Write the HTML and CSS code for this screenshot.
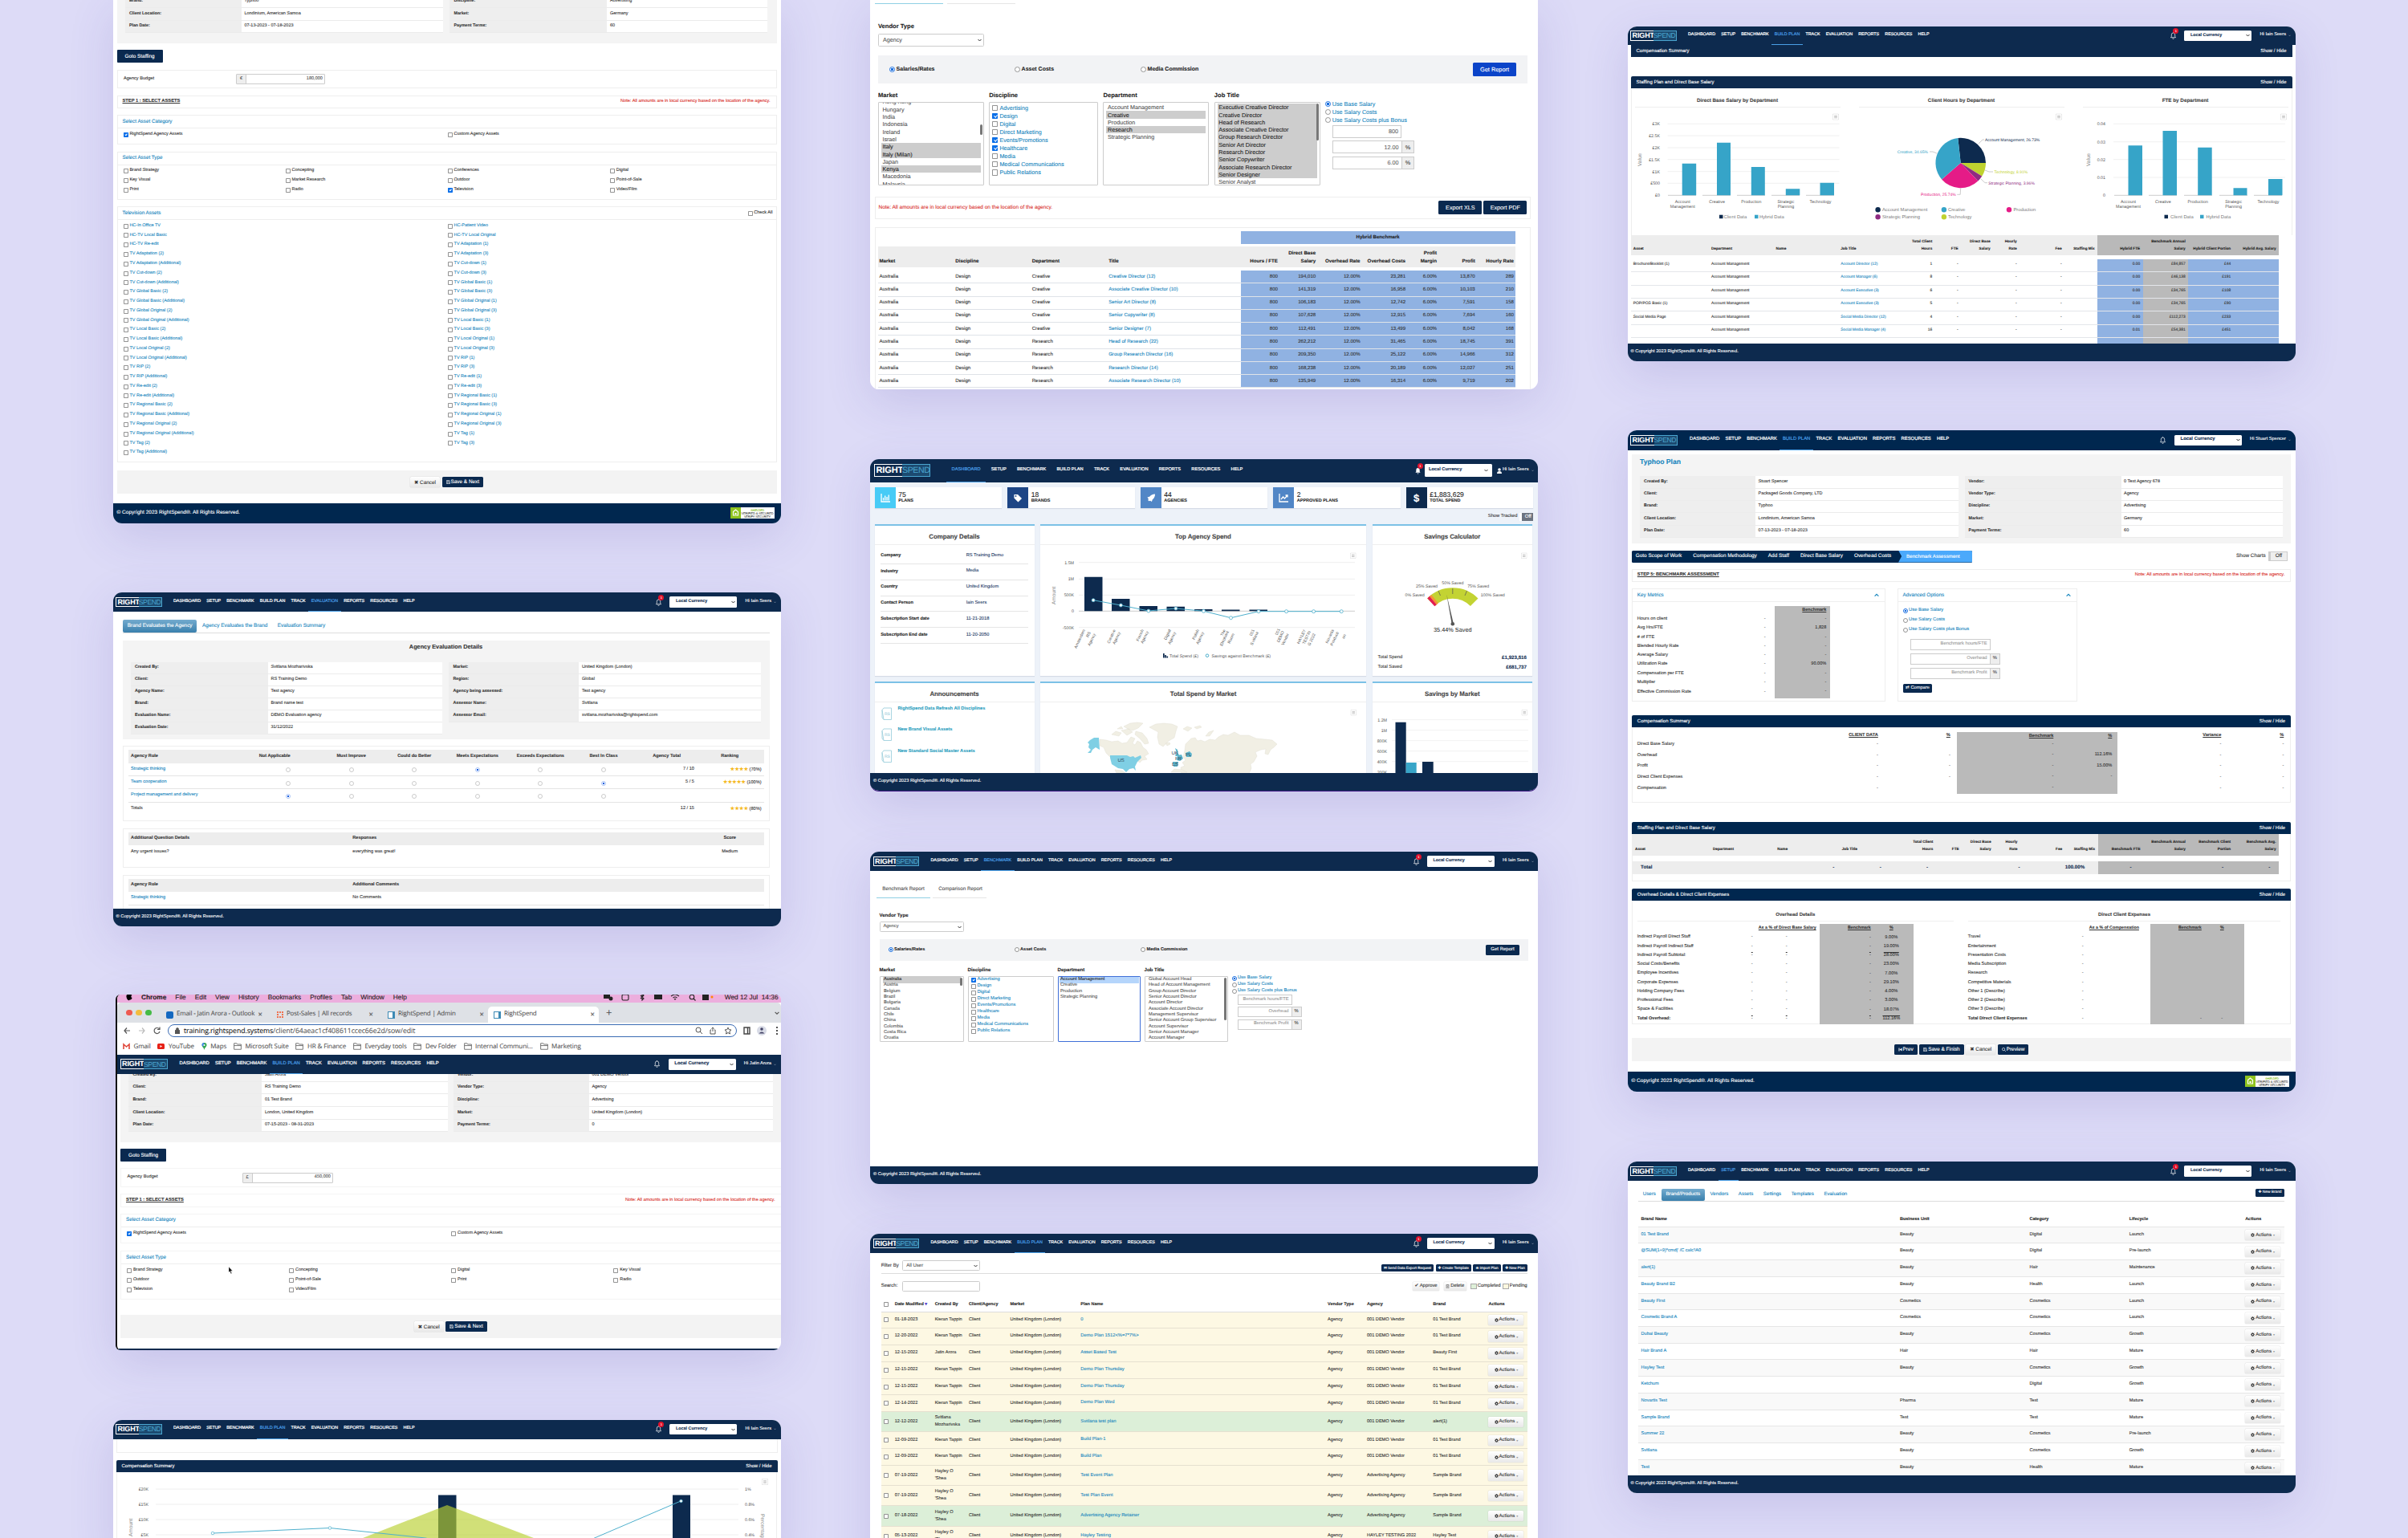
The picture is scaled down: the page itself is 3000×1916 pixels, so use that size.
FILE: index.html
```html
<!DOCTYPE html>
<html lang="en">
<head>
    <meta charset="UTF-8">
    <meta name="viewport" content="width=device-width, initial-scale=1.0">
    <title>RightSpend - product screens</title>
    <link rel="stylesheet" href="styles.css">
</head>
<body>
    <!-- shared icons -->
    <svg class="sprite" aria-hidden="true">
        <symbol id="bell" viewBox="0 0 16 20"><path d="M8 2a5 5 0 0 1 5 5v5l2 3H1l2-3V7a5 5 0 0 1 5-5zM8 0v2M6 17a2 2 0 0 0 4 0" fill="none" stroke="currentColor" stroke-width="1.6"/></symbol>
        <symbol id="bell-solid" viewBox="0 0 16 20"><path d="M8 2a5 5 0 0 1 5 5v5l2 3H1l2-3V7a5 5 0 0 1 5-5zM6 17a2 2 0 0 0 4 0z" fill="currentColor"/></symbol>
        <symbol id="chev" viewBox="0 0 10 8"><path d="M1 2l4 4 4-4" fill="none" stroke="currentColor" stroke-width="2"/></symbol>
        <symbol id="menu" viewBox="0 0 15 15"><rect x=".5" y=".5" width="14" height="14" rx="2" fill="#fff" stroke="#ccc"/><path d="M4 5h7M4 7.500h7M4 10h7" stroke="#999"/></symbol>
        <symbol id="folder" viewBox="0 0 16 14"><path d="M1 1h5l1.500 2H15v10H1zM1 5.500h14" fill="none" stroke="#666" stroke-width="1.400"/></symbol>
        <symbol id="save" viewBox="0 0 12 12"><path d="M1 1h8l2 2v8H1zM3 1v3h5V1M3 11V7h6v4" fill="none" stroke="currentColor" stroke-width="1.300"/></symbol>
        <symbol id="gear" viewBox="0 0 12 12"><circle cx="6" cy="6" r="3.400" fill="none" stroke="currentColor" stroke-width="2.600"/><path d="M6 0v12M0 6h12M1.800 1.800l8.400 8.400M10.200 1.800l-8.400 8.400" stroke="currentColor" stroke-width="1.500" stroke-dasharray="2 8 2"/></symbol>
        <symbol id="secured" viewBox="0 0 55 14"><path d="M0 0h55v14H0z" fill="#fff"/><path d="M0 0h13v14H0z" fill="#8fc31f"/><path d="M3.500 5.500 6.500 3l3 2.500V10h-6z" fill="none" stroke="#fff" stroke-width="1.200"/><path d="M5.500 7h2v2h-2z" fill="#fff"/></symbol>
        <symbol id="rs" viewBox="0 0 14 17"><path d="M1 3.500 3 1h9.500v14.500H3z" fill="none" stroke="#9fd0de" stroke-width=".9"/><path d="M1 3.500V13l2 2.500" fill="none" stroke="#9fd0de" stroke-width=".9"/></symbol>
    </svg>

    <main class="board">
        <div class="col">

            <!-- plan, select assets -->
            <section class="card plan plan-a">
                <div class="content">
                    <div class="details">
                        <div class="kv">
                            <p><b>Brand:</b><span>Typhoo</span></p>
                            <p><b>Client Location:</b><span>Londinium, American Samoa</span></p>
                            <p><b>Plan Date:</b><span>07-13-2023 - 07-18-2023</span></p>
                        </div>
                        <div class="kv">
                            <p><b>Discipline:</b><span>Advertising</span></p>
                            <p><b>Market:</b><span>Germany</span></p>
                            <p><b>Payment Terms:</b><span>60</span></p>
                        </div>
                    </div>
                    <button class="btn goto">Goto Staffing</button>
                    <div class="panel budget"><span>Agency Budget</span><span class="group"><em>€</em><b>180,000</b></span></div>
                    <div class="panel step"><u>STEP 1 : SELECT ASSETS</u><span class="note">Note: All amounts are in local currency based on the location of the agency.</span></div>
                    <div class="panel category">
                        <h4>Select Asset Category</h4>
                        <div class="opts two"><label><i class="cb on"></i>RightSpend Agency Assets</label><label><i class="cb"></i>Custom Agency Assets</label></div>
                    </div>
                    <div class="panel type">
                        <h4>Select Asset Type</h4>
                        <div class="opts four">
                            <label><i class="cb"></i>Brand Strategy</label><label><i class="cb"></i>Concepting</label><label><i class="cb"></i>Conferences</label><label><i class="cb"></i>Digital</label>
                            <label><i class="cb"></i>Key Visual</label><label><i class="cb"></i>Market Research</label><label><i class="cb"></i>Outdoor</label><label><i class="cb"></i>Point-of-Sale</label>
                            <label><i class="cb"></i>Print</label><label><i class="cb"></i>Radio</label><label><i class="cb on"></i>Television</label><label><i class="cb"></i>Video/Film</label>
                        </div>
                    </div>
                    <div class="panel television">
                        <h4>Television Assets <label><i class="cb"></i>Check All</label></h4>
                        <div class="opts two blue">
                            <label><i class="cb"></i>HC-In Office TV</label><label><i class="cb"></i>HC-Patient Video</label>
                            <label><i class="cb"></i>HC-TV Local Basic</label><label><i class="cb"></i>HC-TV Local Original</label>
                            <label><i class="cb"></i>HC-TV Re-edit</label><label><i class="cb"></i>TV Adaptation (1)</label>
                            <label><i class="cb"></i>TV Adaptation (2)</label><label><i class="cb"></i>TV Adaptation (3)</label>
                            <label><i class="cb"></i>TV Adaptation (Additional)</label><label><i class="cb"></i>TV Cut-down (1)</label>
                            <label><i class="cb"></i>TV Cut-down (2)</label><label><i class="cb"></i>TV Cut-down (3)</label>
                            <label><i class="cb"></i>TV Cut-down (Additional)</label><label><i class="cb"></i>TV Global Basic (1)</label>
                            <label><i class="cb"></i>TV Global Basic (2)</label><label><i class="cb"></i>TV Global Basic (3)</label>
                            <label><i class="cb"></i>TV Global Basic (Additional)</label><label><i class="cb"></i>TV Global Original (1)</label>
                            <label><i class="cb"></i>TV Global Original (2)</label><label><i class="cb"></i>TV Global Original (3)</label>
                            <label><i class="cb"></i>TV Global Original (Additional)</label><label><i class="cb"></i>TV Local Basic (1)</label>
                            <label><i class="cb"></i>TV Local Basic (2)</label><label><i class="cb"></i>TV Local Basic (3)</label>
                            <label><i class="cb"></i>TV Local Basic (Additional)</label><label><i class="cb"></i>TV Local Original (1)</label>
                            <label><i class="cb"></i>TV Local Original (2)</label><label><i class="cb"></i>TV Local Original (3)</label>
                            <label><i class="cb"></i>TV Local Original (Additional)</label><label><i class="cb"></i>TV RIP (1)</label>
                            <label><i class="cb"></i>TV RIP (2)</label><label><i class="cb"></i>TV RIP (3)</label>
                            <label><i class="cb"></i>TV RIP (Additional)</label><label><i class="cb"></i>TV Re-edit (1)</label>
                            <label><i class="cb"></i>TV Re-edit (2)</label><label><i class="cb"></i>TV Re-edit (3)</label>
                            <label><i class="cb"></i>TV Re-edit (Additional)</label><label><i class="cb"></i>TV Regional Basic (1)</label>
                            <label><i class="cb"></i>TV Regional Basic (2)</label><label><i class="cb"></i>TV Regional Basic (3)</label>
                            <label><i class="cb"></i>TV Regional Basic (Additional)</label><label><i class="cb"></i>TV Regional Original (1)</label>
                            <label><i class="cb"></i>TV Regional Original (2)</label><label><i class="cb"></i>TV Regional Original (3)</label>
                            <label><i class="cb"></i>TV Regional Original (Additional)</label><label><i class="cb"></i>TV Tag (1)</label>
                            <label><i class="cb"></i>TV Tag (2)</label><label><i class="cb"></i>TV Tag (3)</label>
                            <label><i class="cb"></i>TV Tag (Additional)</label>
                        </div>
                    </div>
                    <div class="actions"><button class="btn light">✖ Cancel</button><button class="btn"><svg><use href="#save"/></svg>Save &amp; Next</button></div>
                </div>
                <footer class="foot big">© Copyright 2023 RightSpend®. All Rights Reserved.<span class="seal"><svg><use href="#secured"/></svg><small><em>SHIELDED</em>VERIFIED &amp; SECURED<br>VERIFY SECURITY</small></span></footer>
            </section>

            <!-- evaluation -->
            <section class="card evaluation">
                <header class="nav">
                    <span class="logo"><b>RIGHT</b><i>SPEND</i></span>
                    <nav><a>DASHBOARD</a><a>SETUP</a><a>BENCHMARK</a><a>BUILD PLAN</a><a>TRACK</a><a class="on">EVALUATION</a><a>REPORTS</a><a>RESOURCES</a><a>HELP</a></nav>
                    <span class="bell"><svg><use href="#bell"/></svg><sup>1</sup></span>
                    <span class="currency">Local Currency<svg><use href="#chev"/></svg></span>
                    <span class="user">Hi Iain Seers <svg><use href="#chev"/></svg></span>
                </header>
                <div class="content">
                    <div class="tabs"><a class="on">Brand Evaluates the Agency</a><a>Agency Evaluates the Brand</a><a>Evaluation Summary</a></div>
                    <div class="details">
                        <h3>Agency Evaluation Details</h3>
                        <div class="kv">
                            <p><b>Created By:</b><span>Svitlana Mozharivska</span></p>
                            <p><b>Client:</b><span>RS Training Demo</span></p>
                            <p><b>Agency Name:</b><span>Test agency</span></p>
                            <p><b>Brand:</b><span>Brand name test</span></p>
                            <p><b>Evaluation Name:</b><span>DEMO Evaluation agency</span></p>
                            <p><b>Evaluation Date:</b><span>31/12/2022</span></p>
                        </div>
                        <div class="kv">
                            <p><b>Market:</b><span>United Kingdom (London)</span></p>
                            <p><b>Region:</b><span>Global</span></p>
                            <p><b>Agency being assessed:</b><span>Test agency</span></p>
                            <p><b>Assessor Name:</b><span>Svitlana</span></p>
                            <p><b>Assessor Email:</b><span>svitlana.mozharivska@rightspend.com</span></p>
                        </div>
                    </div>
                    <div class="panel scores">
                        <div class="row head"><b>Agency Role</b><b>Not Applicable</b><b>Must Improve</b><b>Could do Better</b><b>Meets Expectations</b><b>Exceeds Expectations</b><b>Best In Class</b><b>Agency Total</b><b>Ranking</b></div>
                        <div class="row"><a>Strategic thinking</a><i class="rd"></i><i class="rd"></i><i class="rd"></i><i class="rd on"></i><i class="rd"></i><i class="rd"></i><span>7 / 10</span><span><em>★★★★</em> (70%)</span></div>
                        <div class="row"><a>Team cooperation</a><i class="rd"></i><i class="rd"></i><i class="rd"></i><i class="rd"></i><i class="rd"></i><i class="rd on"></i><span>5 / 5</span><span><em>★★★★★</em> (100%)</span></div>
                        <div class="row"><a>Project management and delivery</a><i class="rd on"></i><i class="rd"></i><i class="rd"></i><i class="rd"></i><i class="rd"></i><i class="rd"></i><span></span><span></span></div>
                        <div class="row total"><span>Totals</span><span></span><span></span><span></span><span></span><span></span><span></span><span>12 / 15</span><span><em>★★★★</em> (80%)</span></div>
                    </div>
                    <div class="panel answers">
                        <div class="row head"><b>Additional Question Details</b><b>Responses</b><b>Score</b></div>
                        <div class="row"><span>Any urgent issues?</span><span>everything was great!</span><span>Medium</span></div>
                    </div>
                    <div class="panel answers">
                        <div class="row head"><b>Agency Role</b><b>Additional Comments</b></div>
                        <div class="row line"><a>Strategic thinking</a><span>No Comments</span></div>
                    </div>
                </div>
                <footer class="foot">© Copyright 2023 RightSpend®. All Rights Reserved.</footer>
            </section>

            <!-- plan in a browser window -->
            <section class="card plan plan-b">
                <div class="menubar">
                    <svg width="8" height="9" viewBox="0 0 8 9"><path d="M4 1C2 0 0 1 .5 4S3 9 4 8s3 0 3.500-3C6 5 6 2 7.500 2 6 0 5 1 4 1z"/></svg>
                    <b>Chrome</b><span>File</span><span>Edit</span><span>View</span><span>History</span><span>Bookmarks</span><span>Profiles</span><span>Tab</span><span>Window</span><span>Help</span>
                    <svg class="status" width="140" height="9" viewBox="0 0 140 9"><g fill="none" stroke="#222" stroke-width="1.100"><rect x="23" y="1" width="8" height="7" rx="1.500"/><path d="M46 2l4 4-2 2V0l2 2-4 4M84 3q5-4 10 0M86.500 5q2.500-2 5 0"/><circle cx="110" cy="4" r="2.800"/><path d="M112 6l2.500 2.500"/></g><path d="M0 1h8v5H0zM63 1h10v6H63zM87.500 6h3L89 8zM123 1h8v7h-8z" fill="#222"/><circle cx="9" cy="6" r="2.500" fill="#222"/><circle cx="135" cy="4" r="1.500" fill="#f80"/></svg>
                    <span>Wed 12 Jul&nbsp; 14:36</span>
                </div>
                <div class="tabstrip">
                    <span class="lights"><i></i><i></i><i></i></span>
                    <span class="tab"><i class="fav outlook"></i>Email - Jatin Arora - Outlook<em>✕</em></span>
                    <span class="tab"><i class="fav hub"></i>Post-Sales | All records<em>✕</em></span>
                    <span class="tab"><i class="fav"></i>RightSpend | Admin<em>✕</em></span>
                    <span class="tab on"><i class="fav"></i>RightSpend<em>✕</em></span>
                    <span class="plus">+</span>
                    <svg class="drop"><use href="#chev"/></svg>
                </div>
                <div class="urlbar">
                    <svg width="52" height="10" viewBox="0 0 52 10"><g fill="none" stroke="#555" stroke-width="1.200"><path d="M8 5H1M4 1.500 1 5l3 3.500"/><path d="M19 5h7M23 1.500 26 5l-3 3.500" stroke="#bbb"/><path d="M44.500 3a3.500 3.500 0 1 0 .5 3M45 .5V3.500H42"/></g></svg>
                    <span class="url"><svg width="6" height="8" viewBox="0 0 6 8"><path d="M0 3.500h6V8H0zM1.500 3.500V2a1.500 1.500 0 0 1 3 0v1.500" fill="#555" stroke="#555" stroke-width=".7"/></svg><b>training.rightspend.systems</b>/client/64aeac1cf408611ccec66e2d/sow/edit
                        <svg class="tools" width="46" height="10" viewBox="0 0 46 10"><g fill="none" stroke="#555"><circle cx="4" cy="4" r="3"/><path d="M6 6l3 3M20 4h-1v5h6V4h-1M22 6V1M20.500 2.500 22 1l1.500 1.500M41 1l1.200 2.700 2.800.3-2.200 2 .7 3L41 7.500 38.500 9l.7-3L37 4l2.800-.3z"/></g></svg>
                    </span>
                    <svg width="44" height="12" viewBox="0 0 44 12"><path d="M1 2h7v8H1zM5.500 2v8" fill="none" stroke="#444" stroke-width="1.400"/><circle cx="23" cy="6" r="6" fill="#d8dbe6"/><circle cx="23" cy="4" r="1.800" fill="#446"/><path d="M19.500 9.500q3.500-4 7 0z" fill="#446"/><circle cx="42" cy="2" r=".9"/><circle cx="42" cy="6" r=".9"/><circle cx="42" cy="10" r=".9"/></svg>
                </div>
                <div class="bookmarks">
                    <span><svg width="9" height="7" viewBox="0 0 9 7"><path d="M1 7V1l3.500 3L8 1v6" fill="none" stroke="#e0483c" stroke-width="1.600"/></svg>Gmail</span>
                    <span><svg width="9" height="7" viewBox="0 0 9 7"><rect width="9" height="7" rx="1.500" fill="#e62117"/><path d="M3.500 2v3L6 3.500z" fill="#fff"/></svg>YouTube</span>
                    <span><svg width="7" height="9" viewBox="0 0 7 9"><path d="M3.500 9C3 6 .5 5 .5 3a3 3 0 0 1 6 0c0 2-2.500 3-3 6z" fill="#34a853"/><path d="M.5 3a3 3 0 0 1 3-3L2 5z" fill="#4285f4"/><circle cx="3.500" cy="3" r="1.100" fill="#fff"/></svg>Maps</span>
                    <span><svg><use href="#folder"/></svg>Microsoft Suite</span><span><svg><use href="#folder"/></svg>HR &amp; Finance</span><span><svg><use href="#folder"/></svg>Everyday tools</span><span><svg><use href="#folder"/></svg>Dev Folder</span><span><svg><use href="#folder"/></svg>Internal Communi...</span><span><svg><use href="#folder"/></svg>Marketing</span>
                </div>
                <header class="nav wide">
                    <span class="logo"><b>RIGHT</b><i>SPEND</i></span>
                    <nav><a>DASHBOARD</a><a>SETUP</a><a>BENCHMARK</a><a class="on">BUILD PLAN</a><a>TRACK</a><a>EVALUATION</a><a>REPORTS</a><a>RESOURCES</a><a>HELP</a></nav>
                    <span class="bell"><svg><use href="#bell"/></svg></span>
                    <span class="currency">Local Currency<svg><use href="#chev"/></svg></span>
                    <span class="user">Hi Jatin Arora <svg><use href="#chev"/></svg></span>
                </header>
                <div class="content">
                    <div class="details">
                        <div class="kv">
                            <p><b>Created By:</b><span>Jatin Arora</span></p>
                            <p><b>Client:</b><span>RS Training Demo</span></p>
                            <p><b>Brand:</b><span>01 Test Brand</span></p>
                            <p><b>Client Location:</b><span>London, United Kingdom</span></p>
                            <p><b>Plan Date:</b><span>07-15-2023 - 08-31-2023</span></p>
                        </div>
                        <div class="kv">
                            <p><b>Vendor:</b><span>001 DEMO Vendor</span></p>
                            <p><b>Vendor Type:</b><span>Agency</span></p>
                            <p><b>Discipline:</b><span>Advertising</span></p>
                            <p><b>Market:</b><span>United Kingdom (London)</span></p>
                            <p><b>Payment Terms:</b><span>0</span></p>
                        </div>
                    </div>
                    <button class="btn goto">Goto Staffing</button>
                    <div class="panel budget"><span>Agency Budget</span><span class="group"><em>£</em><b>450,000</b></span></div>
                    <div class="panel step"><u>STEP 1 : SELECT ASSETS</u><span class="note">Note: All amounts are in local currency based on the location of the agency.</span></div>
                    <div class="panel category">
                        <h4>Select Asset Category</h4>
                        <div class="opts two"><label><i class="cb on"></i>RightSpend Agency Assets</label><label><i class="cb"></i>Custom Agency Assets</label></div>
                    </div>
                    <div class="panel type">
                        <h4>Select Asset Type</h4>
                        <div class="opts four">
                            <label><i class="cb"></i>Brand Strategy</label><label><i class="cb"></i>Concepting</label><label><i class="cb"></i>Digital</label><label><i class="cb"></i>Key Visual</label>
                            <label><i class="cb"></i>Outdoor</label><label><i class="cb"></i>Point-of-Sale</label><label><i class="cb"></i>Print</label><label><i class="cb"></i>Radio</label>
                            <label><i class="cb"></i>Television</label><label><i class="cb"></i>Video/Film</label>
                        </div>
                        <svg class="cursor" viewBox="0 0 6 10"><path d="M0 0v8l1.800-1.600L3.200 10l1.300-.6L3 6h2.600z" stroke="#fff" stroke-width=".4"/></svg>
                    </div>
                    <div class="actions"><button class="btn light">✖ Cancel</button><button class="btn"><svg><use href="#save"/></svg>Save &amp; Next</button></div>
                </div>
                <footer class="foot thin"></footer>
            </section>

            <!-- compensation summary chart -->
            <section class="card compensation">
                <header class="nav">
                    <span class="logo"><b>RIGHT</b><i>SPEND</i></span>
                    <nav><a>DASHBOARD</a><a>SETUP</a><a>BENCHMARK</a><a class="on">BUILD PLAN</a><a>TRACK</a><a>EVALUATION</a><a>REPORTS</a><a>RESOURCES</a><a>HELP</a></nav>
                    <span class="bell"><svg><use href="#bell"/></svg><sup>1</sup></span>
                    <span class="currency">Local Currency<svg><use href="#chev"/></svg></span>
                    <span class="user">Hi Iain Seers <svg><use href="#chev"/></svg></span>
                </header>
                <div class="content">
                    <div class="panel blank"></div>
                    <div class="bar">Compensation Summary<span>Show / Hide</span></div>
                    <svg class="chart" width="823" height="90">
                        <path d="M48 21h726M48 40h726M48 59h726M48 78h726" stroke="#eee"/>
                        <path d="M400 28.500h22.500V90H400zM692 28.500h22V90h-22z" fill="#0d2a4e"/>
                        <path d="M411 41 519 82l20 8H282l24-8z" fill="#b8cf2f" fill-opacity=".65"/>
                        <path d="m119 76 146-6.500 119 12.500 40 8M590 84l112-48" fill="none" stroke="#4fb0cd"/>
                        <g fill="#fff" stroke="#4fb0cd" stroke-width=".7"><circle cx="119" cy="76" r="1.800"/><circle cx="265" cy="69.500" r="1.800"/><circle cx="702.500" cy="36" r="1.800"/></g>
                        <g class="end"><text x="39" y="23">£20K</text><text x="39" y="42">£15K</text><text x="39" y="61">£10K</text><text x="39" y="80">£5K</text></g>
                        <text x="782" y="23">1%</text><text x="782" y="42">0.8%</text><text x="782" y="61">0.6%</text><text x="782" y="80">0.4%</text>
                        <text class="axis" transform="translate(18.500 80) rotate(-90)">Amount</text>
                        <text class="axis" transform="translate(802 52) rotate(90)">Percentage</text>
                        <use href="#menu" x="803" y="8" width="8" height="8"/>
                    </svg>
                </div>
            </section>
        </div>

        <div class="col">

            <!-- benchmark results -->
            <section class="card report report-a">
                <div class="content">
                    <div class="report-tabs"><a class="on"></a><a></a></div>
                    <h5>Vendor Type</h5>
                    <span class="select">Agency<svg><use href="#chev"/></svg></span>
                    <div class="kinds"><label><i class="rd on"></i>Salaries/Rates</label><label><i class="rd"></i>Asset Costs</label><label><i class="rd"></i>Media Commission</label><button class="btn">Get Report</button></div>
                    <div class="filters">
                        <div><h5>Market</h5><ul class="list market"><li>Hong Kong</li><li>Hungary</li><li>India</li><li>Indonesia</li><li>Ireland</li><li>Israel</li><li class="sel">Italy</li><li class="sel">Italy (Milan)</li><li>Japan</li><li class="sel">Kenya</li><li>Macedonia</li><li>Malaysia</li></ul></div>
                        <div><h5>Discipline</h5><ul class="list checks"><li><i class="cb"></i>Advertising</li><li><i class="cb on"></i>Design</li><li><i class="cb"></i>Digital</li><li><i class="cb"></i>Direct Marketing</li><li><i class="cb on"></i>Events/Promotions</li><li><i class="cb on"></i>Healthcare</li><li><i class="cb"></i>Media</li><li><i class="cb"></i>Medical Communications</li><li><i class="cb"></i>Public Relations</li></ul></div>
                        <div><h5>Department</h5><ul class="list"><li>Account Management</li><li class="sel">Creative</li><li>Production</li><li class="sel">Research</li><li>Strategic Planning</li></ul></div>
                        <div><h5>Job Title</h5><ul class="list jobs"><li class="sel">Executive Creative Director</li><li class="sel">Creative Director</li><li class="sel">Head of Research</li><li class="sel">Associate Creative Director</li><li class="sel">Group Research Director</li><li class="sel">Senior Art Director</li><li class="sel">Research Director</li><li class="sel">Senior Copywriter</li><li class="sel">Associate Research Director</li><li class="sel">Senior Designer</li><li>Senior Analyst</li></ul></div>
                        <div class="basis"><label><i class="rd on"></i>Use Base Salary</label><label><i class="rd"></i>Use Salary Costs</label><label><i class="rd"></i>Use Salary Costs plus Bonus</label><span class="field">800</span><span class="field">12.00<em>%</em></span><span class="field">6.00<em>%</em></span></div>
                    </div>
                    <div class="panel export"><span class="note">Note: All amounts are in local currency based on the location of the agency.</span><button class="btn">Export XLS</button><button class="btn">Export PDF</button></div>
                    <div class="panel rates">
                        <div class="row band"><b>Hybrid Benchmark</b></div>
                        <div class="row head"><b>Market</b><b>Discipline</b><b>Department</b><b>Title</b><b>Hours / FTE</b><b>Direct Base<br>Salary</b><b>Overhead Rate</b><b>Overhead Costs</b><b>Profit<br>Margin</b><b>Profit</b><b>Hourly Rate</b></div>
                        <div class="row"><span>Australia</span><span>Design</span><span>Creative</span><a>Creative Director (12)</a><span>800</span><span>194,010</span><span>12.00%</span><span>23,281</span><span>6.00%</span><span>13,870</span><span>289</span></div>
                        <div class="row"><span>Australia</span><span>Design</span><span>Creative</span><a>Associate Creative Director (10)</a><span>800</span><span>141,319</span><span>12.00%</span><span>16,958</span><span>6.00%</span><span>10,103</span><span>210</span></div>
                        <div class="row"><span>Australia</span><span>Design</span><span>Creative</span><a>Senior Art Director (8)</a><span>800</span><span>106,183</span><span>12.00%</span><span>12,742</span><span>6.00%</span><span>7,591</span><span>158</span></div>
                        <div class="row"><span>Australia</span><span>Design</span><span>Creative</span><a>Senior Copywriter (8)</a><span>800</span><span>107,628</span><span>12.00%</span><span>12,915</span><span>6.00%</span><span>7,694</span><span>160</span></div>
                        <div class="row"><span>Australia</span><span>Design</span><span>Creative</span><a>Senior Designer (7)</a><span>800</span><span>112,491</span><span>12.00%</span><span>13,499</span><span>6.00%</span><span>8,042</span><span>168</span></div>
                        <div class="row"><span>Australia</span><span>Design</span><span>Research</span><a>Head of Research (22)</a><span>800</span><span>262,212</span><span>12.00%</span><span>31,465</span><span>6.00%</span><span>18,745</span><span>391</span></div>
                        <div class="row"><span>Australia</span><span>Design</span><span>Research</span><a>Group Research Director (16)</a><span>800</span><span>209,350</span><span>12.00%</span><span>25,122</span><span>6.00%</span><span>14,966</span><span>312</span></div>
                        <div class="row"><span>Australia</span><span>Design</span><span>Research</span><a>Research Director (14)</a><span>800</span><span>168,238</span><span>12.00%</span><span>20,189</span><span>6.00%</span><span>12,027</span><span>251</span></div>
                        <div class="row"><span>Australia</span><span>Design</span><span>Research</span><a>Associate Research Director (10)</a><span>800</span><span>135,949</span><span>12.00%</span><span>16,314</span><span>6.00%</span><span>9,719</span><span>202</span></div>
                    </div>
                </div>
            </section>

            <!-- dashboard -->
            <section class="card dashboard">
                <header class="nav tall">
                    <span class="logo"><b>RIGHT</b><i>SPEND</i></span>
                    <nav><a class="on">DASHBOARD</a><a>SETUP</a><a>BENCHMARK</a><a>BUILD PLAN</a><a>TRACK</a><a>EVALUATION</a><a>REPORTS</a><a>RESOURCES</a><a>HELP</a></nav>
                    <span class="bell"><svg><use href="#bell-solid"/></svg><sup>1</sup></span>
                    <span class="currency">Local Currency<svg><use href="#chev"/></svg></span>
                    <span class="user"><svg class="person" viewBox="0 0 6 7"><circle cx="3" cy="2" r="1.800" fill="#fff"/><path d="M0 7q0-3 3-3t3 3z" fill="#fff"/></svg>Hi Iain Seers <svg><use href="#chev"/></svg></span>
                </header>
                <div class="content">
                    <div class="stats">
                        <div><i class="c1"><svg viewBox="0 0 12 11"><path d="M1 0v10h11M3.500 8.500V5M5.700 8.500V2.500M8 8.500V4M10.200 8.500V1.500" fill="none" stroke="#fff" stroke-width="1.300"/></svg></i><p>75<b>PLANS</b></p></div>
                        <div><i class="c2"><svg viewBox="0 0 12 12"><path d="M1 1h5l5.500 5.500-5 5L1 6z" fill="#fff"/><circle cx="3.300" cy="3.300" r="1" fill="#1d4585"/></svg></i><p>18<b>BRANDS</b></p></div>
                        <div><i class="c3"><svg viewBox="0 0 12 12"><path d="M11.500.5C8 .5 5.500 2 4 4L1 5l1.500 2L2 9l1 1 2-.5L7 11l1-3c2-1.500 3.500-4 3.500-7.500z" fill="#fff"/></svg></i><p>44<b>AGENCIES</b></p></div>
                        <div><i class="c3"><svg viewBox="0 0 12 11"><path d="M1 0v10h11M3 7l2.500-3 2 2L11 2M8.500 2H11v2.500" fill="none" stroke="#fff" stroke-width="1.300"/></svg></i><p>2<b>APPROVED PLANS</b></p></div>
                        <div><i class="c4">$</i><p>£1,883,629<b>TOTAL SPEND</b></p></div>
                    </div>
                    <div class="tracked">Show Tracked<span>Off</span></div>
                    <div class="tiles">
                        <article>
                            <h3>Company Details</h3>
                            <div class="company">
                                <p><b>Company</b>RS Training Demo</p><p><b>Industry</b>Media</p><p><b>Country</b>United Kingdom</p><p><b>Contact Person</b>Iain Seers</p><p><b>Subscription Start date</b>11-21-2018</p><p><b>Subscription End date</b>11-20-2050</p>
                            </div>
                        </article>
                        <article>
                            <h3>Top Agency Spend</h3>
                            <svg class="chart" width="406" height="163">
                                <path d="M48 21.700h344M48 42.300h344M48 62.300h344M48 102.700h344" stroke="#eee"/><path d="M48 82.300h344" stroke="#ccc"/>
                                <path d="M55 39.700h22.500v42.600H55zM89 67h22.500v15.300H89zM123.500 76H146v6.300h-22.500zM157.500 76.700H180v5.600h-22.500zM192 80h22.500v2.300H192zM226 80.500h22.500v1.800H226zM260.500 80.500H283v1.800h-22.500z" fill="#0d2a4e"/>
                                <path d="m66.100 68.700 34.300 6.300 34.500 7 34-3 34.600 3.300 34 8.400 34.500-8 103.200 0" fill="none" stroke="#4fb0cd"/>
                                <g fill="#fff" stroke="#4fb0cd" stroke-width=".8"><circle cx="66.100" cy="68.700" r="2"/><circle cx="100.400" cy="75" r="2"/><circle cx="134.900" cy="82" r="2"/><circle cx="168.900" cy="79" r="2"/><circle cx="203.500" cy="82.300" r="2"/><circle cx="237.500" cy="90.700" r="2"/><circle cx="272" cy="82.700" r="2"/><circle cx="306.600" cy="82.700" r="2"/><circle cx="340.600" cy="82.700" r="2"/><circle cx="375.200" cy="82.700" r="2"/></g>
                                <g class="end"><text x="42" y="23.700">1.5M</text><text x="42" y="44.300">1M</text><text x="42" y="64.300">500K</text><text x="42" y="84.300">0</text><text x="42" y="104.700">-500K</text></g>
                                <text class="axis" transform="translate(18.500 74) rotate(-90)">Amount</text>
                                <g class="tick">
                                    <text transform="translate(56 106) rotate(-65)">Amsterdam</text><text transform="translate(63 109) rotate(-65)">RS</text><text transform="translate(69 111) rotate(-65)">Agency</text>
                                    <text transform="translate(94 106) rotate(-65)">Creative</text><text transform="translate(100 109) rotate(-65)">Agency</text>
                                    <text transform="translate(129 106) rotate(-65)">French</text><text transform="translate(135 108) rotate(-65)">Agency</text>
                                    <text transform="translate(163 106) rotate(-65)">Digital</text><text transform="translate(169 109) rotate(-65)">Agency</text>
                                    <text transform="translate(198 106) rotate(-65)">Polish</text><text transform="translate(204 109) rotate(-65)">Agency</text>
                                    <text transform="translate(231 106) rotate(-65)">The</text><text transform="translate(235 108) rotate(-65)">Elephant</text><text transform="translate(242 111) rotate(-65)">Room</text>
                                    <text transform="translate(267 106) rotate(-65)">001</text><text transform="translate(272 109) rotate(-65)">Svitlana</text>
                                    <text transform="translate(299 105) rotate(-65)">001</text><text transform="translate(304 108) rotate(-65)">DEMO</text><text transform="translate(310 111) rotate(-65)">Vendor</text>
                                    <text transform="translate(331 106) rotate(-65)">HAYLEY</text><text transform="translate(337 108) rotate(-65)">TESTIN</text><text transform="translate(343 111) rotate(-65)">G 2022</text>
                                    <text transform="translate(366 106) rotate(-65)">Novartis</text><text transform="translate(372 109) rotate(-65)">Producti</text><text transform="translate(381 112) rotate(-65)">on</text>
                                </g>
                                <path d="M153 135h1.700v5.500H153zM155.200 137h1.700v3.500h-1.700zM157.400 138.500h1.700v2h-1.700z" fill="#0d2a4e"/><text x="161" y="139.500">Total Spend (£)</text>
                                <circle cx="208" cy="137.700" r="1.800" fill="#fff" stroke="#4fb0cd"/><text x="213.500" y="139.500">Savings against Benchmark (£)</text>
                                <use href="#menu" x="386" y="9.500" width="7.500" height="7.500"/>
                            </svg>
                        </article>
                        <article>
                            <h3>Savings Calculator</h3>
                            <svg class="chart" width="199" height="134">
                                <path d="M72.800 71.300A38 38 0 0 1 126.700 71.300" fill="none" stroke="#c3d333" stroke-width="13.500"/>
                                <path d="M72.800 71.300 75.500 68.900" stroke="#e31b54" stroke-width="13.500"/><path d="M75.400 69 77.500 67.300" stroke="#f4923a" stroke-width="13.500"/>
                                <path d="M99.800 54v7M82 57l2.500 6M117.500 57 115 63" stroke="#555" stroke-width=".7"/>
                                <path d="M92.200 61.300 98.700 98.500h2.300z"/><circle cx="99.800" cy="98.300" r="2.300"/>
                                <g class="mid"><text x="52.700" y="63.700">0% Saved</text><text x="67.500" y="52.700">25% Saved</text><text x="99.800" y="48.500">50% Saved</text><text x="131.700" y="52.700">75% Saved</text><text x="149.800" y="63.700">100% Saved</text><text class="saved" x="99.800" y="108">35.44% Saved</text></g>
                                <use href="#menu" x="185" y="9.500" width="7.500" height="7.500"/>
                            </svg>
                            <p class="sum">Total Spend<b>£1,923,516</b></p><p class="sum">Total Saved<b>£681,737</b></p>
                        </article>
                        <article>
                            <h3>Announcements</h3>
                            <div class="news"><a><i><svg><use href="#rs"/></svg>RS</i>RightSpend Data Refresh All Disciplines</a><a><i><svg><use href="#rs"/></svg>RS</i>New Brand Visual Assets</a><a><i><svg><use href="#rs"/></svg>RS</i>New Standard Social Master Assets</a></div>
                        </article>
                        <article>
                            <h3>Total Spend by Market</h3>
                            <svg class="chart" width="406" height="90">
                                <g fill="#f1efe4" stroke="#dedbd0" stroke-width=".4">
                                    <path d="m74 46 8 1 7 2 8-1 5 3 6-1 5-7 5 2-3 6 3 2 3-5 4 2 3 6 4 3 3 5-5 3 3 4-6 1-3 3-3-2-6-4H88l-6-6-3-7-5-2z"/>
                                    <path d="m89 40 5-4 7 2-3 4zM101 35l9-2 5 4-7 4zM104 30l8-4 9-1 7 1-6 6-7 3-6-2zM119 36l8 2 6 7 2 6-5 1-6-7-6-5zM96 33l5-3 2 3z"/>
                                    <path d="m136 31 8-4 10-1 10 1 7 3-2 6-2 8-7 4-7 7-5-3-2-9 1-6z"/>
                                    <path d="m156 51 5-1 1 2-4 2z"/>
                                    <path d="m180 60 1-8 7-7 5-1 3 4 4-1 5 2 6-3 7 1 4-4 6-3 6 1 8-4 7 4 11 0 9 4 11 1 9 1 6 5-4 4-4 3-3 6-4-1 1-6-6 1-7 3 2 5-4 7-4 3 1 5-4 9H176l-1-10 5-2-3-4 4-3-3-4z"/>
                                    <path d="m178 33 5-3 6 2-5 4zM192 31l7-2 2 2-6 2zM206 42l4-5 6-2-5 7z"/>
                                    <path d="m163 87 4-4 10 1 6 3zM93 84l9 1 4 3H95z"/>
                                </g>
                                <path d="M59 50l3-3 5-3 6 0 1 15-5-3-4 3-2 4-4 0 4-4-3-3 1-4zM87 66h21l4 2 4-1 2 2 7-3 1 3-5 5-3 6 1 5-3-3-5 1-4 4-4-4-6-1-8-5-2-8z" fill="#7fcfe4"/>
                                <path d="m168 57 3 2 1 5 2 3-6 0 2-4zM171 66l5-1 2 5-4 3-4-1zM165 74h7l-1 6h-5zM181 63l5-2 3 3-1 4h-6z" fill="#5db5cb"/>
                                <g class="map"><text x="96.500" y="73.500">US</text><text x="163.500" y="65">UK</text><text x="168" y="72">FR</text><text x="164" y="79">ES</text><text x="181" y="67">PL</text></g>
                                <use href="#menu" x="386.500" y="9" width="7.500" height="7.500"/>
                            </svg>
                        </article>
                        <article>
                            <h3>Savings by Market</h3>
                            <svg class="chart" width="199" height="90">
                                <path d="M24 21.700h170M24 34.700h170M24 47.700h170M24 60.700h170M24 73.700h170" stroke="#f2f2f2"/>
                                <path d="M28.500 24.700h13.200V90H28.500zM62 74h13.700v16H62z" fill="#0d2a4e"/><path d="M41.700 75h13v15h-13z" fill="#38a5c8"/>
                                <g class="end"><text x="18" y="23.700">1.2M</text><text x="18" y="36.700">1M</text><text x="18" y="49.700">800K</text><text x="18" y="62.700">600K</text><text x="18" y="75.700">400K</text><text x="18" y="88.500">200K</text></g>
                                <use href="#menu" x="185.500" y="9" width="7.500" height="7.500"/>
                            </svg>
                        </article>
                    </div>
                </div>
                <footer class="foot">© Copyright 2023 RightSpend®. All Rights Reserved.</footer>
            </section>

            <!-- benchmark form -->
            <section class="card report report-b">
                <header class="nav">
                    <span class="logo"><b>RIGHT</b><i>SPEND</i></span>
                    <nav><a>DASHBOARD</a><a>SETUP</a><a class="on">BENCHMARK</a><a>BUILD PLAN</a><a>TRACK</a><a>EVALUATION</a><a>REPORTS</a><a>RESOURCES</a><a>HELP</a></nav>
                    <span class="bell"><svg><use href="#bell"/></svg><sup>1</sup></span>
                    <span class="currency">Local Currency<svg><use href="#chev"/></svg></span>
                    <span class="user">Hi Iain Seers <svg><use href="#chev"/></svg></span>
                </header>
                <div class="content">
                    <div class="report-tabs"><a class="on">Benchmark Report</a><a>Comparison Report</a></div>
                    <h5>Vendor Type</h5>
                    <span class="select">Agency<svg><use href="#chev"/></svg></span>
                    <div class="kinds"><label><i class="rd on"></i>Salaries/Rates</label><label><i class="rd"></i>Asset Costs</label><label><i class="rd"></i>Media Commission</label><button class="btn">Get Report</button></div>
                    <div class="filters">
                        <div><h5>Market</h5><ul class="list jobs"><li class="sel">Australia</li><li>Austria</li><li>Belgium</li><li>Brazil</li><li>Bulgaria</li><li>Canada</li><li>Chile</li><li>China</li><li>Colombia</li><li>Costa Rica</li><li>Croatia</li></ul></div>
                        <div><h5>Discipline</h5><ul class="list checks"><li><i class="cb on"></i>Advertising</li><li><i class="cb"></i>Design</li><li><i class="cb"></i>Digital</li><li><i class="cb"></i>Direct Marketing</li><li><i class="cb"></i>Events/Promotions</li><li><i class="cb"></i>Healthcare</li><li><i class="cb"></i>Media</li><li><i class="cb"></i>Medical Communications</li><li><i class="cb"></i>Public Relations</li></ul></div>
                        <div><h5>Department</h5><ul class="list focus"><li class="sel">Account Management</li><li>Creative</li><li>Production</li><li>Strategic Planning</li></ul></div>
                        <div><h5>Job Title</h5><ul class="list titles"><li>Global Account Head</li><li>Head of Account Management</li><li>Group Account Director</li><li>Senior Account Director</li><li>Account Director</li><li>Associate Account Director</li><li>Management Supervisor</li><li>Senior Account Group Supervisor</li><li>Account Supervisor</li><li>Senior Account Manager</li><li>Account Manager</li></ul></div>
                        <div class="basis"><label><i class="rd on"></i>Use Base Salary</label><label><i class="rd"></i>Use Salary Costs</label><label><i class="rd"></i>Use Salary Costs plus Bonus</label><span class="field">Benchmark hours/FTE</span><span class="field">Overhead<em>%</em></span><span class="field">Benchmark Profit<em>%</em></span></div>
                    </div>
                </div>
                <footer class="foot">© Copyright 2023 RightSpend®. All Rights Reserved.</footer>
            </section>

            <!-- plan list -->
            <section class="card plans">
                <header class="nav">
                    <span class="logo"><b>RIGHT</b><i>SPEND</i></span>
                    <nav><a>DASHBOARD</a><a>SETUP</a><a>BENCHMARK</a><a class="on">BUILD PLAN</a><a>TRACK</a><a>EVALUATION</a><a>REPORTS</a><a>RESOURCES</a><a>HELP</a></nav>
                    <span class="bell"><svg><use href="#bell"/></svg><sup>1</sup></span>
                    <span class="currency">Local Currency<svg><use href="#chev"/></svg></span>
                    <span class="user">Hi Iain Seers <svg><use href="#chev"/></svg></span>
                </header>
                <div class="content">
                    <div class="filter"><label>Filter By</label><span class="select">All User<svg><use href="#chev"/></svg></span><span class="tools"><button class="btn">✉ Send Data Export Request</button><button class="btn">✚ Create Template</button><button class="btn">⊕ Import Plan</button><button class="btn">✚ New Plan</button></span></div>
                    <div class="search"><label>Search:</label><span class="select"></span><span class="tools"><button class="btn light">✔ Approve</button><button class="btn light"><svg viewBox="0 0 10 12"><path d="M0 2h10M3 2V.5h4V2M1.500 2v9.500h7V2M4 4.500V9M6 4.500V9" fill="none" stroke="#333"/></svg>Delete</button><span><i class="green"></i>Completed</span><span><i></i>Pending</span></span></div>
                    <div class="row head"><i class="cb"></i><b>Date Modified <em>▾</em></b><b>Created By</b><b>Client/Agency</b><b>Market</b><b>Plan Name</b><b>Vendor Type</b><b>Agency</b><b>Brand</b><b>Actions</b></div>
                    <div class="row"><i class="cb"></i><span>01-18-2023</span><span>Kieran Tappin</span><span>Client</span><span>United Kingdom (London)</span><a>0</a><span>Agency</span><span>001 DEMO Vendor</span><span>01 Test Brand</span><button class="btn light act"><svg><use href="#gear"/></svg>Actions<em>▾</em></button></div>
                    <div class="row"><i class="cb"></i><span>12-20-2022</span><span>Kieran Tappin</span><span>Client</span><span>United Kingdom (London)</span><a>Demo Plan 1512&lt;%=7*7%&gt;</a><span>Agency</span><span>001 DEMO Vendor</span><span>01 Test Brand</span><button class="btn light act"><svg><use href="#gear"/></svg>Actions<em>▾</em></button></div>
                    <div class="row"><i class="cb"></i><span>12-15-2022</span><span>Jatin Arora</span><span>Client</span><span>United Kingdom (London)</span><a>Asset Based Test</a><span>Agency</span><span>001 DEMO Vendor</span><span>Beauty First</span><button class="btn light act"><svg><use href="#gear"/></svg>Actions<em>▾</em></button></div>
                    <div class="row"><i class="cb"></i><span>12-15-2022</span><span>Kieran Tappin</span><span>Client</span><span>United Kingdom (London)</span><a>Demo Plan Thursday</a><span>Agency</span><span>001 DEMO Vendor</span><span>01 Test Brand</span><button class="btn light act"><svg><use href="#gear"/></svg>Actions<em>▾</em></button></div>
                    <div class="row"><i class="cb"></i><span>12-15-2022</span><span>Kieran Tappin</span><span>Client</span><span>United Kingdom (London)</span><a>Demo Plan Thursday</a><span>Agency</span><span>001 DEMO Vendor</span><span>01 Test Brand</span><button class="btn light act"><svg><use href="#gear"/></svg>Actions<em>▾</em></button></div>
                    <div class="row"><i class="cb"></i><span>12-14-2022</span><span>Kieran Tappin</span><span>Client</span><span>United Kingdom (London)</span><a>Demo Plan Wed</a><span>Agency</span><span>001 DEMO Vendor</span><span>01 Test Brand</span><button class="btn light act"><svg><use href="#gear"/></svg>Actions<em>▾</em></button></div>
                    <div class="row tall done"><i class="cb"></i><span>12-12-2022</span><span>Svitlana<br>Mozharivska</span><span>Client</span><span>United Kingdom (London)</span><a>Svitlana test plan</a><span>Agency</span><span>001 DEMO Vendor</span><span>alert(1)</span><button class="btn light act"><svg><use href="#gear"/></svg>Actions<em>▾</em></button></div>
                    <div class="row"><i class="cb"></i><span>12-09-2022</span><span>Kieran Tappin</span><span>Client</span><span>United Kingdom (London)</span><a>Build Plan-1</a><span>Agency</span><span>001 DEMO Vendor</span><span>01 Test Brand</span><button class="btn light act"><svg><use href="#gear"/></svg>Actions<em>▾</em></button></div>
                    <div class="row"><i class="cb"></i><span>12-09-2022</span><span>Kieran Tappin</span><span>Client</span><span>United Kingdom (London)</span><a>Build Plan</a><span>Agency</span><span>001 DEMO Vendor</span><span>01 Test Brand</span><button class="btn light act"><svg><use href="#gear"/></svg>Actions<em>▾</em></button></div>
                    <div class="row tall"><i class="cb"></i><span>07-19-2022</span><span>Hayley O<br>'Shea</span><span>Client</span><span>United Kingdom (London)</span><a>Test Event Plan</a><span>Agency</span><span>Advertising Agency</span><span>Sample Brand</span><button class="btn light act"><svg><use href="#gear"/></svg>Actions<em>▾</em></button></div>
                    <div class="row tall"><i class="cb"></i><span>07-19-2022</span><span>Hayley O<br>'Shea</span><span>Client</span><span>United Kingdom (London)</span><a>Test Plan Event</a><span>Agency</span><span>Advertising Agency</span><span>Sample Brand</span><button class="btn light act"><svg><use href="#gear"/></svg>Actions<em>▾</em></button></div>
                    <div class="row tall done"><i class="cb"></i><span>07-18-2022</span><span>Hayley O<br>'Shea</span><span>Client</span><span>United Kingdom (London)</span><a>Advertising Agency Retainer</a><span>Agency</span><span>Advertising Agency</span><span>Sample Brand</span><button class="btn light act"><svg><use href="#gear"/></svg>Actions<em>▾</em></button></div>
                    <div class="row tall"><i class="cb"></i><span>05-13-2022</span><span>Hayley O<br>'Shea</span><span>Client</span><span>United Kingdom (London)</span><a>Hayley Testing</a><span>Agency</span><span>HAYLEY TESTING 2022</span><span>Hayley Test</span><button class="btn light act"><svg><use href="#gear"/></svg>Actions<em>▾</em></button></div>
                </div>
            </section>
        </div>

        <div class="col">

            <!-- staffing plan -->
            <section class="card staffing">
                <header class="nav">
                    <span class="logo"><b>RIGHT</b><i>SPEND</i></span>
                    <nav><a>DASHBOARD</a><a>SETUP</a><a>BENCHMARK</a><a class="on">BUILD PLAN</a><a>TRACK</a><a>EVALUATION</a><a>REPORTS</a><a>RESOURCES</a><a>HELP</a></nav>
                    <span class="bell"><svg><use href="#bell"/></svg><sup>1</sup></span>
                    <span class="currency">Local Currency<svg><use href="#chev"/></svg></span>
                    <span class="user">Hi Iain Seers <svg><use href="#chev"/></svg></span>
                </header>
                <div class="content">
                    <div class="bar first">Compensation Summary<span>Show / Hide</span></div>
                    <div class="bar">Staffing Plan and Direct Base Salary<span>Show / Hide</span></div>
                    <div class="charts">
                        <figure>
                            <h5>Direct Base Salary by Department</h5>
                            <svg class="chart" width="256" height="150">
                                <path d="M40.600 20.300h214M40.600 35h214M40.600 50h214M40.600 64.700h214M40.600 79.700h214M40.600 94.300h214" stroke="#f0f0f0"/>
                                <path d="M41 109.300h35M84 109.300h35M127 109.300h35M170 109.300h35M213 109.300h35" stroke="#ccc"/>
                                <path d="M58.700 69.700h17.500v39.600H58.700zM102 43.700h17v65.600h-17zM144.800 74h17v35.300h-17zM187.800 101.300h17.500v8h-17.500zM230.500 93.700H248v15.600h-17.500z" fill="#36a4c8"/>
                                <g class="end"><text x="31" y="22.300">£3K</text><text x="31" y="37">£2.5K</text><text x="31" y="52">£2K</text><text x="31" y="66.700">£1.5K</text><text x="31" y="81.700">£1K</text><text x="31" y="96.300">£500</text><text x="31" y="111.300">£0</text></g>
                                <g class="mid"><text x="59.200" y="119">Account</text><text x="59.200" y="125.300">Management</text><text x="102" y="119">Creative</text><text x="144.800" y="119">Production</text><text x="188" y="119">Strategic</text><text x="188" y="125.300">Planning</text><text x="231" y="119">Technology</text></g>
                                <text class="axis" transform="translate(7.500 73) rotate(-90)">Value</text>
                                <path d="M105 133.700h4.500v4.500H105z" fill="#0d2a4e"/><text class="lg" x="110.500" y="138">Client Data</text><path d="M149 133.700h4.500v4.500H149z" fill="#36a4c8"/><text class="lg" x="155" y="138">Hybrid Data</text>
                                <use href="#menu" x="246" y="7.500" width="8" height="8"/>
                            </svg>
                        </figure>
                        <figure>
                            <h5>Client Hours by Department</h5>
                            <svg class="chart" width="256" height="150">
                                <path d="M126.700 69 123.300 37.900A31.300 31.300 0 0 1 158 69z" fill="#0d2a4e"/>
                                <path d="M126.700 69H158A31.300 31.300 0 0 1 153.200 85.600z" fill="#bfd22f"/>
                                <path d="M126.700 69 153.200 85.600A31.300 31.300 0 0 1 148.300 91.600z" fill="#8f2b82"/>
                                <path d="M126.700 69 148.300 91.600A31.300 31.300 0 0 1 103.100 89.500z" fill="#e51b87"/>
                                <path d="M126.700 69 103.100 89.500A31.300 31.300 0 0 1 123.300 37.900z" fill="#36a4c8"/>
                                <path d="M149 45l5-5h2M97 57l-5-2h-4M157 78l5 2h5M152 89l5 4.700h3M126.700 100.500l-.5 7.800h-4" fill="none" stroke="#aaa" stroke-width=".6"/>
                                <g class="pie"><text x="156.900" y="42" fill="#0d2a4e">Account Management, 26.73%</text><text class="r" x="86" y="57" fill="#36a4c8">Creative, 34.65%</text><text x="168.400" y="81.700" fill="#bfd22f">Technology, 8.91%</text><text x="161.300" y="95.500" fill="#8f2b82">Strategic Planning, 3.96%</text><text class="r" x="120.700" y="110.300" fill="#e51b87">Production, 25.74%</text></g>
                                <circle cx="23.600" cy="127.300" r="3.200" fill="#0d2a4e"/><circle cx="105.900" cy="127.300" r="3.200" fill="#36a4c8"/><circle cx="187" cy="127.300" r="3.200" fill="#e51b87"/><circle cx="23.600" cy="136.300" r="3.200" fill="#8f2b82"/><circle cx="105.900" cy="136.300" r="3.200" fill="#bfd22f"/>
                                <g class="lg"><text x="29" y="129.300">Account Management</text><text x="111" y="129.300">Creative</text><text x="192.500" y="129.300">Production</text><text x="29" y="138.300">Strategic Planning</text><text x="111" y="138.300">Technology</text></g>
                                <use href="#menu" x="245" y="7.500" width="8" height="8"/>
                            </svg>
                        </figure>
                        <figure>
                            <h5>FTE by Department</h5>
                            <svg class="chart" width="256" height="150">
                                <path d="M38 20.300h214M38 42.700h214M38 64.700h214M38 87h214" stroke="#f0f0f0"/>
                                <path d="M39 109.300h35M82 109.300h35M126 109.300h35M170 109.300h35M213 109.300h35" stroke="#ccc"/>
                                <path d="M56.500 47.300H74v62H56.500zM99.500 29H117v80.300H99.500zM143.200 49.700h17.500v59.600h-17.500zM187.500 100.300h17v9h-17zM231 89h17.500v20.300H231z" fill="#36a4c8"/>
                                <g class="end"><text x="28" y="22.300">0.04</text><text x="28" y="44.700">0.03</text><text x="28" y="66.700">0.02</text><text x="28" y="89">0.01</text><text x="28" y="111.300">0</text></g>
                                <g class="mid"><text x="56.500" y="119">Account</text><text x="56.500" y="125.300">Management</text><text x="99.800" y="119">Creative</text><text x="143.200" y="119">Production</text><text x="187.600" y="119">Strategic</text><text x="187.600" y="125.300">Planning</text><text x="231" y="119">Technology</text></g>
                                <text class="axis" transform="translate(8.500 73) rotate(-90)">Value</text>
                                <path d="M101.500 133.700h4.500v4.500h-4.500z" fill="#0d2a4e"/><text class="lg" x="109" y="138">Client Data</text><path d="M146 133.700h4.500v4.500H146z" fill="#36a4c8"/><text class="lg" x="153.500" y="138">Hybrid Data</text>
                                <use href="#menu" x="246" y="7.500" width="8" height="8"/>
                            </svg>
                        </figure>
                    </div>
                    <div class="row head"><b>Asset</b><b>Department</b><b>Name</b><b>Job Title</b><b>Total Client<br>Hours</b><b>FTE</b><b>Direct Base<br>Salary</b><b>Hourly<br>Rate</b><b>Fee</b><b>Staffing Mix</b><b>Hybrid FTE</b><b>Benchmark Annual<br>Salary</b><b>Hybrid Client Portion</b><b>Hybrid Avg. Salary</b></div>
                    <div class="row"><span>Brochure/Booklet (1)</span><span>Account Management</span><span></span><a>Account Director (12)</a><span>1</span><span>-</span><span></span><span>-</span><span>-</span><span></span><span>0.00</span><span>£84,857</span><span>£44</span><span></span></div>
                    <div class="row"><span></span><span>Account Management</span><span></span><a>Account Manager (6)</a><span>8</span><span>-</span><span></span><span>-</span><span>-</span><span></span><span>0.00</span><span>£46,138</span><span>£191</span><span></span></div>
                    <div class="row"><span></span><span>Account Management</span><span></span><a>Account Executive (3)</a><span>6</span><span>-</span><span></span><span>-</span><span>-</span><span></span><span>0.00</span><span>£34,765</span><span>£108</span><span></span></div>
                    <div class="row"><span>POP/POS Basic (1)</span><span>Account Management</span><span></span><a>Account Executive (3)</a><span>5</span><span>-</span><span></span><span>-</span><span>-</span><span></span><span>0.00</span><span>£34,765</span><span>£90</span><span></span></div>
                    <div class="row"><span>Social Media Page</span><span>Account Management</span><span></span><a>Social Media Director (12)</a><span>4</span><span>-</span><span></span><span>-</span><span>-</span><span></span><span>0.00</span><span>£112,273</span><span>£233</span><span></span></div>
                    <div class="row"><span></span><span>Account Management</span><span></span><a>Social Media Manager (4)</a><span>16</span><span>-</span><span></span><span>-</span><span>-</span><span></span><span>0.01</span><span>£54,381</span><span>£451</span><span></span></div>
                    <div class="row"></div>
                </div>
                <footer class="foot">© Copyright 2023 RightSpend®. All Rights Reserved.</footer>
            </section>

            <!-- benchmark assessment -->
            <section class="card assessment">
                <header class="nav wide">
                    <span class="logo"><b>RIGHT</b><i>SPEND</i></span>
                    <nav><a>DASHBOARD</a><a>SETUP</a><a>BENCHMARK</a><a class="on">BUILD PLAN</a><a>TRACK</a><a>EVALUATION</a><a>REPORTS</a><a>RESOURCES</a><a>HELP</a></nav>
                    <span class="bell"><svg><use href="#bell"/></svg></span>
                    <span class="currency">Local Currency<svg><use href="#chev"/></svg></span>
                    <span class="user">Hi Stuart Spencer <svg><use href="#chev"/></svg></span>
                </header>
                <div class="content">
                    <div class="details">
                        <h3>Typhoo Plan</h3>
                        <div class="kv">
                            <p><b>Created By:</b><span>Stuart Spencer</span></p>
                            <p><b>Client:</b><span>Packaged Goods Company, LTD</span></p>
                            <p><b>Brand:</b><span>Typhoo</span></p>
                            <p><b>Client Location:</b><span>Londinium, American Samoa</span></p>
                            <p><b>Plan Date:</b><span>07-13-2023 - 07-18-2023</span></p>
                        </div>
                        <div class="kv">
                            <p><b>Vendor:</b><span>0 Test Agency 678</span></p>
                            <p><b>Vendor Type:</b><span>Agency</span></p>
                            <p><b>Discipline:</b><span>Advertising</span></p>
                            <p><b>Market:</b><span>Germany</span></p>
                            <p><b>Payment Terms:</b><span>60</span></p>
                        </div>
                    </div>
                    <div class="steps"><ol><li>Goto Scope of Work</li><li>Compensation Methodology</li><li>Add Staff</li><li>Direct Base Salary</li><li>Overhead Costs</li><li class="on">Benchmark Assessment</li></ol><span>Show Charts</span><em>Off</em></div>
                    <div class="panel step"><u>STEP 5: BENCHMARK ASSESSMENT</u><span class="note">Note: All amounts are in local currency based on the location of the agency.</span></div>
                    <div class="pair">
                        <div class="panel metrics">
                            <h4>Key Metrics<svg><use href="#chev"/></svg></h4>
                            <div class="mrow head"><span></span><span></span><b>Benchmark</b></div>
                            <div class="mrow"><span>Hours on client</span><span>-</span><b>-</b></div>
                            <div class="mrow"><span>Avg Hrs/FTE</span><span>-</span><b>1,828</b></div>
                            <div class="mrow"><span># of FTE</span><span>-</span><b>-</b></div>
                            <div class="mrow"><span>Blended Hourly Rate</span><span>-</span><b>-</b></div>
                            <div class="mrow"><span>Average Salary</span><span>-</span><b>-</b></div>
                            <div class="mrow"><span>Utilization Rate</span><span>-</span><b>90.00%</b></div>
                            <div class="mrow"><span>Compensation per FTE</span><span>-</span><b>-</b></div>
                            <div class="mrow"><span>Multiplier</span><span>-</span><b>-</b></div>
                            <div class="mrow last"><span>Effective Commission Rate</span><span>-</span><b>-</b></div>
                        </div>
                        <div class="panel advanced">
                            <h4>Advanced Options<svg><use href="#chev"/></svg></h4>
                            <div class="basis"><label><i class="rd on"></i>Use Base Salary</label><label><i class="rd"></i>Use Salary Costs</label><label><i class="rd"></i>Use Salary Costs plus Bonus</label><span class="field">Benchmark hours/FTE</span><span class="field">Overhead<em>%</em></span><span class="field">Benchmark Profit<em>%</em></span></div>
                            <button class="btn">⇄ Compare</button>
                        </div>
                    </div>
                    <div class="bar">Compensation Summary<span>Show / Hide</span></div>
                    <div class="panel summary">
                        <div class="srow head"><b></b><b>CLIENT DATA</b><b>%</b><b>Benchmark</b><b>%</b><b>Variance</b><b>%</b></div>
                        <div class="srow"><span>Direct Base Salary</span><span>-</span><span></span><span>-</span><span></span><span>-</span><span>-</span></div>
                        <div class="srow"><span>Overhead</span><span>-</span><span>-</span><span>-</span><span>112.16%</span><span>-</span><span>-</span></div>
                        <div class="srow"><span>Profit</span><span>-</span><span>-</span><span>-</span><span>15.00%</span><span>-</span><span>-</span></div>
                        <div class="srow"><span>Direct Client Expenses</span><span>-</span><span>-</span><span>-</span><span>-</span><span>-</span><span>-</span></div>
                        <div class="srow"><span>Compensation</span><span>-</span><span></span><span>-</span><span></span><span>-</span><span>-</span></div>
                    </div>
                    <div class="bar">Staffing Plan and Direct Base Salary<span>Show / Hide</span></div>
                    <div class="panel staff">
                        <div class="row head"><b>Asset</b><b>Department</b><b>Name</b><b>Job Title</b><b>Total Client<br>Hours</b><b>FTE</b><b>Direct Base<br>Salary</b><b>Hourly<br>Rate</b><b>Fee</b><b>Staffing Mix</b><b>Benchmark FTE</b><b>Benchmark Annual<br>Salary</b><b>Benchmark Client<br>Portion</b><b>Benchmark Avg.<br>Salary</b></div>
                        <div class="row head sum"><b>Total</b><b></b><b></b><b></b><b>-</b><b>-</b><b>-</b><b></b><b>-</b><b>100.00%</b><b>-</b><b></b><b>-</b><b>-</b></div>
                    </div>
                    <div class="bar">Overhead Details &amp; Direct Client Expenses<span>Show / Hide</span></div>
                    <div class="panel overhead">
                        <div>
                            <h5>Overhead Details</h5>
                            <div class="orow head"><span></span><b></b><b>As a % of Direct Base Salary</b><i>Benchmark</i><i>%</i></div>
                            <div class="orow"><span>Indirect Payroll Direct Staff</span><b>-</b><b>-</b><i>-</i><i>9.00%</i></div>
                            <div class="orow"><span>Indirect Payroll Indirect Staff</span><b>-</b><b>-</b><i>-</i><i>19.00%</i></div>
                            <div class="orow tot"><span>Indirect Payroll Subtotal:</span><b>-</b><b>-</b><i>-</i><i>28.00%</i></div>
                            <div class="orow"><span>Social Costs/Benefits</span><b>-</b><b>-</b><i>-</i><i>23.00%</i></div>
                            <div class="orow"><span>Employee Incentives</span><b>-</b><b>-</b><i>-</i><i>7.00%</i></div>
                            <div class="orow"><span>Corporate Expenses</span><b>-</b><b>-</b><i>-</i><i>29.10%</i></div>
                            <div class="orow"><span>Holding Company Fees</span><b>-</b><b>-</b><i>-</i><i>4.00%</i></div>
                            <div class="orow"><span>Professional Fees</span><b>-</b><b>-</b><i>-</i><i>3.00%</i></div>
                            <div class="orow"><span>Space &amp; Facilities</span><b>-</b><b>-</b><i>-</i><i>18.07%</i></div>
                            <div class="orow tot strong"><span>Total Overhead:</span><b>-</b><b>-</b><i>-</i><i>112.16%</i></div>
                        </div>
                        <div>
                            <h5>Direct Client Expenses</h5>
                            <div class="orow head"><span></span><b></b><b>As a % of Compensation</b><i>Benchmark</i><i>%</i></div>
                            <div class="orow"><span>Travel</span><b>-</b><b></b><i></i><i></i></div>
                            <div class="orow"><span>Entertainment</span><b>-</b><b></b><i></i><i></i></div>
                            <div class="orow"><span>Presentation Costs</span><b>-</b><b></b><i></i><i></i></div>
                            <div class="orow"><span>Media Subscription</span><b>-</b><b></b><i></i><i></i></div>
                            <div class="orow"><span>Research</span><b>-</b><b></b><i></i><i></i></div>
                            <div class="orow"><span>Competitive Materials</span><b>-</b><b></b><i></i><i></i></div>
                            <div class="orow"><span>Other 1 (Describe)</span><b>-</b><b></b><i></i><i></i></div>
                            <div class="orow"><span>Other 2 (Describe)</span><b>-</b><b></b><i></i><i></i></div>
                            <div class="orow"><span>Other 3 (Describe)</span><b>-</b><b></b><i></i><i></i></div>
                            <div class="orow strong"><span>Total Direct Client Expenses</span><b>-</b><b></b><i>-</i><i>-</i></div>
                        </div>
                    </div>
                    <div class="actions"><button class="btn"><svg viewBox="0 0 10 10"><path d="M1 1h2v8H1zM9 1v8L3.500 5z" fill="#fff"/></svg>Prev</button><button class="btn"><svg><use href="#save"/></svg>Save &amp; Finish</button><button class="btn light">✖ Cancel</button><button class="btn"><svg viewBox="0 0 12 12"><circle cx="5" cy="5" r="4" fill="none" stroke="#fff" stroke-width="1.500"/><path d="M8 8l3.500 3.500" stroke="#fff" stroke-width="1.800"/></svg>Preview</button></div>
                </div>
                <footer class="foot big">© Copyright 2023 RightSpend®. All Rights Reserved.<span class="seal"><svg><use href="#secured"/></svg><small><em>SHIELDED</em>VERIFIED &amp; SECURED<br>VERIFY SECURITY</small></span></footer>
            </section>

            <!-- brands -->
            <section class="card brands">
                <header class="nav">
                    <span class="logo"><b>RIGHT</b><i>SPEND</i></span>
                    <nav><a>DASHBOARD</a><a class="on">SETUP</a><a>BENCHMARK</a><a>BUILD PLAN</a><a>TRACK</a><a>EVALUATION</a><a>REPORTS</a><a>RESOURCES</a><a>HELP</a></nav>
                    <span class="bell"><svg><use href="#bell"/></svg><sup>1</sup></span>
                    <span class="currency">Local Currency<svg><use href="#chev"/></svg></span>
                    <span class="user">Hi Iain Seers <svg><use href="#chev"/></svg></span>
                </header>
                <div class="content">
                    <div class="tabs"><a>Users</a><a class="on">Brand/Products</a><a>Vendors</a><a>Assets</a><a>Settings</a><a>Templates</a><a>Evaluation</a><button class="btn">✚ New Brand</button></div>
                    <div class="row head"><b>Brand Name</b><b>Business Unit</b><b>Category</b><b>Lifecycle</b><b>Actions</b></div>
                    <div class="row"><a>01 Test Brand</a><span>Beauty</span><span>Digital</span><span>Launch</span><button class="btn light act"><svg><use href="#gear"/></svg>Actions<em>▾</em></button></div>
                    <div class="row"><a>@SUM(1+9)*cmd|' /C calc'!A0</a><span>Beauty</span><span>Digital</span><span>Pre-launch</span><button class="btn light act"><svg><use href="#gear"/></svg>Actions<em>▾</em></button></div>
                    <div class="row"><a>alert(1)</a><span>Beauty</span><span>Hair</span><span>Maintenance</span><button class="btn light act"><svg><use href="#gear"/></svg>Actions<em>▾</em></button></div>
                    <div class="row"><a>Beauty Brand B2</a><span>Beauty</span><span>Health</span><span>Launch</span><button class="btn light act"><svg><use href="#gear"/></svg>Actions<em>▾</em></button></div>
                    <div class="row"><a>Beauty First</a><span>Cosmetics</span><span>Cosmetics</span><span>Launch</span><button class="btn light act"><svg><use href="#gear"/></svg>Actions<em>▾</em></button></div>
                    <div class="row"><a>Cosmetic Brand A</a><span>Cosmetics</span><span>Cosmetics</span><span>Launch</span><button class="btn light act"><svg><use href="#gear"/></svg>Actions<em>▾</em></button></div>
                    <div class="row"><a>Dubai Beauty</a><span>Beauty</span><span>Cosmetics</span><span>Growth</span><button class="btn light act"><svg><use href="#gear"/></svg>Actions<em>▾</em></button></div>
                    <div class="row"><a>Hair Brand A</a><span>Hair</span><span>Hair</span><span>Mature</span><button class="btn light act"><svg><use href="#gear"/></svg>Actions<em>▾</em></button></div>
                    <div class="row"><a>Hayley Test</a><span>Beauty</span><span>Cosmetics</span><span>Growth</span><button class="btn light act"><svg><use href="#gear"/></svg>Actions<em>▾</em></button></div>
                    <div class="row"><a>Ketchum</a><span></span><span>Digital</span><span>Growth</span><button class="btn light act"><svg><use href="#gear"/></svg>Actions<em>▾</em></button></div>
                    <div class="row"><a>Novartis Test</a><span>Pharma</span><span>Test</span><span>Mature</span><button class="btn light act"><svg><use href="#gear"/></svg>Actions<em>▾</em></button></div>
                    <div class="row"><a>Sample Brand</a><span>Test</span><span>Test</span><span>Mature</span><button class="btn light act"><svg><use href="#gear"/></svg>Actions<em>▾</em></button></div>
                    <div class="row"><a>Summer 22</a><span>Beauty</span><span>Cosmetics</span><span>Pre-launch</span><button class="btn light act"><svg><use href="#gear"/></svg>Actions<em>▾</em></button></div>
                    <div class="row"><a>Svitlana</a><span>Beauty</span><span>Cosmetics</span><span>Growth</span><button class="btn light act"><svg><use href="#gear"/></svg>Actions<em>▾</em></button></div>
                    <div class="row"><a>Test</a><span>Beauty</span><span>Health</span><span>Mature</span><button class="btn light act"><svg><use href="#gear"/></svg>Actions<em>▾</em></button></div>
                </div>
                <footer class="foot">© Copyright 2023 RightSpend®. All Rights Reserved.</footer>
            </section>
        </div>
    </main>
</body>
</html>
```
FILE: styles.css
```css
* {
    box-sizing: border-box;
}
html, body {
    height: 100%;
    overflow: hidden;
}
body {
    margin: 0;
    background: #dddbf7;
    color: #333;
    font-family: 'Liberation Sans', Arial, sans-serif;
    font-size: 5.6px;
    line-height: 1;
    white-space: nowrap;
    text-rendering: geometricPrecision;
    -webkit-text-stroke: 0.1px;
}
p, ul, ol, figure, h3, h4, h5 {
    margin: 0;
    padding: 0;
    list-style: none;
}
em, i {
    font-style: normal;
}
a {
    color: #1786be;
}
svg {
    flex: none;
}
.sprite {
    display: none;
}

/* board */
.board {
    display: grid;
    grid-template-columns: 832px 832px 832px;
    column-gap: 111.5px;
    padding-left: 140.500px;
    height: 1916px;
    overflow: hidden;
}
.col {
    display: flex;
    flex-direction: column;
}
.card {
    flex: none;
    display: flex;
    flex-direction: column;
    overflow: hidden;
    background: #fff;
    border-radius: 11px;
    box-shadow: 0 16px 56px rgba(80, 70, 165, 0.16);
}
.content {
    flex: 1;
    min-height: 0;
    overflow: hidden;
}
.plan-a { height: 652px; border-radius: 0 0 11px 11px; }
.evaluation { height: 415.5px; margin-top: 86px; }
.plan-b { height: 443px; margin: 85.5px 0 0 3.5px; border-left: 2px solid #111; border-radius: 6px 6px 9px 6px; }
.compensation { height: 170px; margin-top: 86.5px; }
.report-a { height: 485px; border-radius: 0 0 11px 11px; }
.dashboard { height: 414px; margin-top: 86.5px; background: #edf2f9; border-bottom: 1px solid #3b1480; }
.report-b { height: 413.5px; margin-top: 75.5px; }
.plans { height: 420px; margin-top: 62.5px; }
.staffing { height: 417px; margin-top: 32.5px; }
.assessment { height: 824px; margin-top: 86.5px; }
.brands { height: 413px; margin-top: 87px; }

/* navbar */
.nav {
    flex: none;
    display: flex;
    align-items: center;
    height: 24px;
    padding: 0 5.500px 0 3.500px;
    background: #0d2a4e;
    color: #fff;
    font-size: 5.4px;
}
.logo {
    display: flex;
    width: 57.5px;
    height: 12.500px;
    font-size: 9px;
    letter-spacing: -0.1px;
}
.logo b, .logo i {
    display: flex;
    align-items: center;
    border: 1px solid #fff;
}
.logo b {
    width: 50%;
    padding-left: 1.5px;
    border-right: 0;
}
.logo i {
    width: 50%;
    border-color: #4aa5cf;
    border-left: 0;
    background: #1c4a70;
    color: #4aa5cf;
    font-size: 8.600px;
    letter-spacing: -0.4px;
    -webkit-text-stroke: 0;
}
.nav nav {
    display: flex;
    align-self: stretch;
    margin-left: 10.9px;
}
.nav nav a {
    display: flex;
    align-items: center;
    padding: 0 3.55px;
    color: #fff;
    border-bottom: 1.5px solid transparent;
    -webkit-text-stroke: 0.2px;
}
.nav nav a.on {
    color: #4a9fe6;
    border-color: #4a9fe6;
}
.bell {
    position: relative;
    display: flex;
    margin: 0 10px 0 auto;
}
.bell svg {
    width: 7px;
    height: 9px;
}
.bell sup {
    position: absolute;
    left: 3px;
    top: -5px;
    width: 7px;
    height: 7px;
    border-radius: 50%;
    background: #e0122b;
    font-size: 4px;
    line-height: 7px;
    text-align: center;
}
.currency {
    display: flex;
    align-items: center;
    justify-content: space-between;
    width: 84px;
    height: 13.600px;
    padding: 0 2.500px 0 7.5px;
    border-radius: 1.5px;
    background: #fff;
    color: #0d2a4e;
    font-weight: bold;
}
.currency svg, .select svg {
    width: 5px;
    height: 4px;
    color: #333;
}
.user {
    display: flex;
    align-items: center;
    margin-left: 10px;
    font-size: 5.7px;
}
.user svg {
    width: 3px;
    height: 2.500px;
    margin-left: 3px;
    opacity: 0.6;
}
.nav.wide {
    height: 24.600px;
    font-size: 5.9px;
}
.nav.wide .bell { margin-right: 11px; }
.nav.wide .logo { width: 59px; height: 13px; }
.nav.wide nav { margin-left: 11.500px; }
.nav.tall {
    height: 29.300px;
    padding-left: 5px;
    font-size: 5.7px;
}
.nav.tall .logo { width: 70px; height: 16px; font-size: 11px; }
.nav.tall .logo i { font-size: 10.600px; }
.nav.tall nav { margin-left: 20px; }
.nav.tall nav a { padding: 0 6.6px; }
.nav.tall .bell { margin-right: 5px; }
.nav.tall .currency { height: 16px; padding: 0 5px; }
.nav.tall .user { margin-left: 6px; }
.user .person { width: 6px; height: 7px; margin: 0 1px 0 0; opacity: 1; }

.foot {
    flex: none;
    display: flex;
    align-items: center;
    justify-content: space-between;
    height: 22px;
    padding: 0 5px 0 4px;
    background: #0d2a4e;
    color: #fff;
    font-size: 5.7px;
}
.foot.big {
    height: 25.500px;
    padding: 0 8px 0 5px;
    background: #00274f;
    font-size: 6.5px;
}
.foot.thin { height: 2px; }
.seal {
    position: relative;
    display: flex;
}
.seal svg { width: 55px; height: 14px; }
.seal small {
    position: absolute;
    left: 14px;
    top: 1.500px;
    width: 40px;
    color: #555;
    font-size: 3.900px;
    line-height: 4px;
    text-align: center;
    letter-spacing: -0.1px;
}
.seal em { display: block; color: #8fc31f; font-size: 3.5px; }

/* small controls */
.cb, .rd {
    flex: none;
    position: relative;
    display: inline-block;
    width: 6px;
    height: 6px;
    border: 1px solid #949494;
    border-radius: 0.8px;
    background: #fff;
}
.cb.on {
    border-color: #0b6fe8;
    background: #0b6fe8;
}
.cb.on::after {
    content: "";
    position: absolute;
    left: 28%;
    top: 5%;
    width: 30%;
    height: 60%;
    border: solid #fff;
    border-width: 0 1px 1px 0;
    transform: rotate(40deg);
}
.rd { border-radius: 50%; }
.rd.on {
    border: 1px solid #1a6fe0;
    background: radial-gradient(#1a6fe0 50%, #fff 55%);
}
.btn {
    display: inline-flex;
    align-items: center;
    justify-content: center;
    height: 13.500px;
    padding: 0 5px;
    border: 0;
    border-radius: 1.5px;
    background: #0a294f;
    color: #fff;
    font: 6px 'Liberation Sans', 'DejaVu Sans', sans-serif;
    white-space: nowrap;
    text-rendering: inherit;
}
.btn svg { width: 5px; height: 5px; margin-right: 1px; }
.btn.light {
    background: linear-gradient(#fff, #e8e8e8);
    box-shadow: 0 0 1px #999;
    color: #333;
}
.act {
    align-self: center;
    width: 44px;
    padding: 0 3px;
    font-size: 6px;
}
.act em { margin-left: 2px; font-size: 4px; color: #999; }
.panel {
    border: 1px solid #eee;
    background: #fff;
}
.note { color: #d9302c; }
.select {
    display: flex;
    align-items: center;
    justify-content: space-between;
    border: 1px solid #ccc;
    border-radius: 1.5px;
    background: #fff;
    color: #555;
}
.bar {
    display: flex;
    align-items: center;
    justify-content: space-between;
    height: 15px;
    padding: 0 7px;
    border-radius: 2px 2px 0 0;
    background: #0d2a4e;
    color: #fff;
    font-size: 6px;
}
.row {
    display: grid;
    align-items: center;
}
.row > *, .mrow > *, .srow > *, .orow > * { min-width: 0; }
.details {
    display: grid;
    align-items: start;
    background: #f4f4f4;
}
.kv p {
    display: grid;
    align-items: center;
    border-bottom: 1px solid #ebebeb;
    background: #fff;
    font-size: 5.5px;
}
.kv b {
    display: flex;
    align-items: center;
    height: 100%;
    padding-left: 5px;
    background: #eee;
    font-size: 5.3px;
}
.kv span { padding-left: 3.5px; }
.tabs {
    display: flex;
    border-bottom: 1px solid #ddd;
    font-size: 6.2px;
}
.tabs a {
    display: flex;
    align-items: center;
    padding: 0 5.6px;
    margin-right: 1.3px;
}
.tabs a.on {
    border-radius: 2px;
    background: linear-gradient(#74abce, #3a80ad);
    color: #fff;
}
.tabs .btn { height: 10px; margin: 0 0 0 auto; padding: 0 3px; font-size: 4.8px; }

/* charts */
.chart {
    display: block;
    overflow: hidden;
    font-size: 5.3px;
    fill: #555;
}
.chart .end text, .chart .r { text-anchor: end; }
.chart .mid text { text-anchor: middle; }
.chart .axis { font-size: 6.5px; fill: #888; }
.chart .tick text { text-anchor: end; font-size: 5px; }
.chart .lg { font-size: 5.8px; fill: #777; }
.chart .pie { font-size: 5px; }
.chart .map { font-size: 6px; fill: #345; }
.chart .saved { font-size: 7.3px; fill: #222; }

/* plan editing */
.plan .content { padding: 0 5px; }
.plan .details {
    grid-template-columns: 396px 396px;
    column-gap: 8.600px;
    margin-top: -5.1px;
    padding: 0 10.4px 13px;
}
.plan .kv p { height: 15.4px; grid-template-columns: 145px 1fr; }
.plan .kv + .kv p { grid-template-columns: 196px 1fr; }
.goto { display: flex; width: 57px; height: 15.7px; margin-top: 8.200px; font-size: 6.4px; border-radius: 1px; }
.budget { display: flex; align-items: center; height: 23.600px; margin-top: 8.700px; padding-left: 7.5px; }
.budget > span:first-child { width: 140px; }
.group { display: flex; width: 111px; height: 13.4px; border: 1px solid #ccc; border-radius: 1px; align-items: center; color: #555; }
.group em { width: 12px; height: 100%; background: #eee; border-right: 1px solid #ccc; text-align: center; line-height: 11.4px; }
.group b { margin-left: auto; padding-right: 2px; font-weight: normal; }
.step { display: flex; align-items: center; justify-content: space-between; height: 16px; margin-top: 8.4px; padding: 0 7px 0 6px; }
.step u { font-size: 5.8px; font-weight: bold; letter-spacing: -0.03px; }
.panel h4 {
    display: flex;
    align-items: center;
    justify-content: space-between;
    height: 16px;
    padding: 0 4px 0 6px;
    border-bottom: 1px solid #eee;
    color: #1786be;
    font-size: 6.3px;
    font-weight: normal;
}
.panel h4 label { display: flex; align-items: center; gap: 1.5px; color: #333; font-size: 5.6px; }
.opts {
    display: grid;
    grid-auto-rows: 11.77px;
    padding: 1.6px 0 0 7.2px;
    font-size: 5.5px;
}
.opts.two { grid-template-columns: 404.2px 404.2px; }
.opts.four { grid-template-columns: repeat(4, 202.1px); }
.opts label { display: flex; align-items: center; gap: 1.700px; }
.opts.blue { color: #1786be; }
.category { height: 36.4px; margin-top: 8.600px; }
.type { position: relative; height: 60px; margin-top: 9px; }
.television { height: 319px; margin-top: 8.600px; }
.actions { display: flex; align-items: center; justify-content: center; gap: 2.500px; height: 29.300px; margin-top: 9.700px; background: #f3f3f3; }
.actions .btn { font-size: 6.4px; }

.plan-b .content { padding: 0 0 0 4px; }
.plan-b .details { margin: -6.3px 0 0; grid-template-columns: 397.5px 398.5px; column-gap: 7px; }
.plan-b .kv p { height: 15.67px; grid-template-columns: 166px 1fr; }
.plan-b .kv + .kv p { grid-template-columns: 169px 1fr; }
.plan-b .budget { height: 24.3px; margin-top: 8px; }
.plan-b .group { margin-left: 3px; width: 113.5px; }
.plan-b .step { height: 16.7px; margin-top: 8px; }
.plan-b .category { height: 37px; margin-top: 8px; }
.plan-b .type { margin-top: 9.3px; height: 60.7px; }
.plan-b .opts { grid-auto-rows: 12px; }
.plan-b .actions { margin-top: 18.7px; height: 29.7px; }
.plan-b .panel { border-right: 0; border-color: #f4f4f4; }
.cursor { position: absolute; left: 134px; top: 19px; width: 5px; height: 9px; }

/* browser chrome */
.menubar {
    flex: none;
    display: flex;
    align-items: center;
    gap: 11px;
    height: 10.300px;
    padding: 0 3px 4px 11px;
    background: #ecaedd;
    color: #222;
    font-size: 8.3px;
}
.menubar .status { margin-left: auto; }
.menubar > * { flex: none; }
.tabstrip, .urlbar, .bookmarks {
    flex: none;
    display: flex;
    align-items: center;
    font: 8.4px 'Open Sans', 'Noto Sans', sans-serif;
    line-height: 1;
    color: #555;
}
.tabstrip { height: 24.700px; background: #dee1e6; border-radius: 5px 5px 0 0; align-items: flex-end; }
.lights { display: flex; align-self: center; gap: 4.5px; width: 48px; padding-left: 11px; }
.lights i { width: 7.5px; height: 7.5px; border-radius: 50%; background: #ee5b50; }
.lights i + i { background: #f2bd3e; }
.lights i + i + i { background: #45bb45; }
.tab { display: flex; align-items: center; gap: 4px; width: 138px; height: 19.500px; padding: 0 5px 0 13px; font-size: 7.9px; letter-spacing: -0.15px; }
.tab em { margin-left: auto; font: 7px 'DejaVu Sans', sans-serif; }
.tab.on { background: #fff; border-radius: 5px 5px 0 0; padding-left: 7px; }
.fav { width: 9px; height: 9px; border: 1px solid #3d8ab5; border-right-width: 3px; background: #fff; }
.fav.outlook { background: #1468c0; border: 0; border-radius: 2px; }
.fav.hub { width: 8px; height: 8px; border: 2px dotted #f0714e; background: none; }
.plus { align-self: center; margin-left: 9px; font-size: 13px; }
.drop { width: 6px; height: 6px; align-self: center; margin: 0 2px 0 auto; }
.urlbar { height: 20px; padding: 0 3px 0 8px; }
.url { position: relative; display: flex; align-items: center; flex: 1; height: 16.5px; margin: 0 8px 0 3px; padding-left: 8px; border: 1.5px solid #3b6cb4; border-radius: 8px; font-size: 8.7px; letter-spacing: -0.05px; }
.url b { margin-left: 5px; font-weight: normal; color: #111; }
.url .tools { margin: 0 5px 0 auto; }
.bookmarks { height: 19.7px; padding-left: 7px; gap: 8.8px; font-size: 8px; letter-spacing: -0.12px; }
.bookmarks span { display: flex; align-items: center; gap: 4.5px; }
.bookmarks svg { height: 9px; }
.bookmarks span:nth-child(n+4) svg { width: 10px; }

/* evaluation */
.evaluation .content { padding: 10.300px 14px 0 12.600px; }
.evaluation .tabs { height: 17px; font-size: 6.45px; }
.evaluation .details {
    grid-template-columns: 388.500px 388.500px;
    column-gap: 8px;
    height: 122.700px;
    margin-top: 9px;
    padding: 0 9.900px;
}
.evaluation .details h3 { grid-column: 1 / 3; height: 20px; font-size: 7.3px; line-height: 16px; text-align: center; }
.evaluation .kv p { height: 15.04px; grid-template-columns: 171px 1fr; }
.evaluation .kv + .kv p { grid-template-columns: 162px 1fr; }
.evaluation .panel { padding: 4px 6px 0; }
.scores { height: 93.300px; margin-top: 8.300px; }
.evaluation .row { height: 16.4px; padding: 0 3px; }
.evaluation .row.head { background: #ededed; font-size: 5.6px; }
.scores .row { grid-template-columns: 288fr repeat(8, 144.5fr); border-bottom: 1px solid #e4e4e4; justify-items: center; }
.scores .row.head, .scores .row.total { border: 0; }
.scores .row > :first-child { justify-self: start; }
.scores .row b:nth-child(2) { justify-self: start; padding-left: 3px; }
.scores .row span:nth-child(n+8) { justify-self: end; }
.scores .row span:nth-child(8) { padding-right: 5px; }
.scores .rd { border-color: #ccc; top: 1px; }
.scores .rd.on { border-color: #aac4f5; background: radial-gradient(#1a5fe0 45%, #fff 55%); }
.scores em { color: #f5b81c; font-family: 'DejaVu Sans', sans-serif; font-size: 6.5px; letter-spacing: -0.2px; }
.answers { height: 48.700px; margin-top: 9.300px; }
.answers .row { grid-template-columns: 506fr 789fr 144fr; }
.answers .row > :nth-child(3) { text-align: center; }
.answers .row.line { border-bottom: 1px solid #e4e4e4; }

/* compensation chart */
.compensation .content, .staffing .content { padding: 0 4px; }
.blank { height: 17px; border-top: 0; }
.compensation .bar { margin-top: 9.500px; }
.compensation .chart { border: solid #eee; border-width: 0 1px; }

/* benchmark report */
.report .content { padding: 0 12px; }
.report h5 { font-size: 7.6px; color: #222; }
.report-tabs { display: flex; }
.report-tabs a { border-bottom: 1.5px solid #e5e5e5; color: #555; }
.report-tabs a.on { border-color: #8fd0e4; }
.kinds { position: relative; display: grid; grid-template-columns: 1fr 1fr 1fr 1fr 1fr; align-items: center; background: #f2f3f5; color: #222; font-weight: bold; }
.kinds label { display: flex; align-items: center; gap: 1.5px; }
.kinds .btn { grid-column: 5; justify-self: end; }
.filters { display: grid; align-items: start; }
.list { position: relative; overflow: hidden; border: 1px solid #ccc; border-radius: 1px; color: #555; }
.list li { display: flex; align-items: center; margin: 0 3px; padding-left: 1.5px; }
.list .sel { background: #cdcdcd; color: #222; }
.checks { color: #1786be; }
.checks li { gap: 2px; padding: 0; }
.market::after, .jobs::after, .titles::after { content: ""; position: absolute; right: 1px; top: 1px; width: 3px; background: #777; border-radius: 2px; }
.basis { color: #1786be; }
.basis label { display: flex; align-items: center; gap: 1.5px; }
.field { display: flex; align-items: center; justify-content: flex-end; border: 1px solid #ccc; color: #666; padding-right: 3px; }
.field em { display: flex; align-items: center; justify-content: center; align-self: stretch; margin: 0 -3px 0 3px; border-left: 1px solid #ccc; background: #eee; color: #444; }

.report-a .content { padding: 0 13px 0 9.900px; font-size: 7.2px; }
.report-a .report-tabs { gap: 5px; margin-left: -4.400px; height: 5px; }
.report-a .report-tabs a { width: 85px; }
.report-a > .content > h5 { margin: 24px 0 4.700px; line-height: 8px; }
.report-a .select { width: 132px; height: 16.5px; padding: 0 2px 0 5px; }
.report-a .kinds { height: 35px; margin-top: 10.5px; padding: 0 14px; grid-template-columns: 156px 157px 1fr 0 60px; font-size: 7px; }
.report-a .kinds .btn { width: 54px; height: 16.700px; background: #0b44c9; font-size: 7.4px; }
.report-a .filters { grid-template-columns: 132px 136px 132px 132px 1fr; column-gap: 6.3px; margin-top: 11px; }
.report-a .filters h5 { height: 12px; line-height: 8px; }
.report-a .list { height: 104px; padding-top: 1.5px; }
.report-a .list li { height: 9.300px; }
.report-a .market { padding-top: 0; }
.report-a .market li:first-child { margin-top: -5.300px; }
.report-a .checks li { height: 10.1px; }
.report-a .market::after { top: 27px; height: 13px; }
.report-a .jobs::after { height: 46px; }
.report-a .basis { margin-top: 10px; }
.report-a .basis label { height: 10px; }
.report-a .rd, .report-a .cb { width: 7.2px; height: 7.2px; }
.report-a .field { width: 86.500px; height: 16.300px; margin: 0 0 3.200px 8.500px; }
.report-a .field:first-of-type { margin-top: 1px; }
.report-a .field:has(em) { width: 102.500px; }
.report-a .field em { width: 15.5px; }
.export { display: flex; align-items: center; gap: 2px; height: 27.500px; margin: 14.500px -4.300px 0 -4.400px; padding: 0 4px; font-size: 6.5px; }
.export .note { margin-right: auto; }
.export .btn { width: 54px; height: 17px; font-size: 7.2px; }
.rates { height: 220px; margin: 10px -4.300px 0 -4.400px; padding: 4px 18.800px 0 3.400px; font-size: 6.1px; }
.rates .row { grid-template-columns: 173fr 174fr 174fr 303fr 87fr 86fr 101fr 103fr 71fr 87fr 88fr; height: 16.270px; }
.rates .row > * { padding: 0 1.5px; }
.rates .row > :nth-child(n+5) { text-align: right; }
.rates .row.head { height: 26.700px; margin: 3px 0 3.700px; background: #ededed; align-items: end; padding-bottom: 2px; font-size: 6.2px; line-height: 10.200px; color: #222; }
.rates .row.band { height: 16px; }
.rates .band b { grid-column: 5 / 12; height: 100%; background: #90b2e2; line-height: 16px; text-align: center; color: #222; }
.rates .row:nth-child(n+3) { background: linear-gradient(90deg, transparent 56.950%, #90b2e2 56.950%); border-bottom: 1px solid #dfe3e8; }

.report-b .content { font-size: 5.7px; padding: 0 12px 0 11.5px; }
.report-b h5 { font-size: 6.1px; }
.report-b .report-tabs { gap: 3.500px; margin: 17.500px 0 0 -3.300px; height: 16.800px; }
.report-b .report-tabs a { display: flex; align-items: center; width: 66.5px; padding: 0 0 4px 7px; font-size: 6.3px; }
.report-b > .content > h5 { margin: 19px 0 4px; line-height: 6px; }
.report-b .select { width: 105px; height: 12.7px; padding: 0 2px 0 4px; }
.report-b .kinds { height: 27.700px; margin-top: 8.6px; padding: 0 11px; grid-template-columns: 157px 157.500px 1fr 0 60px; font-size: 5.6px; }
.report-b .kinds .btn { width: 42px; }
.report-b .filters { grid-template-columns: 105px 107px 103px 104px 1fr; column-gap: 5px; margin-top: 8.600px; }
.report-b .filters h5 { height: 9.700px; line-height: 6px; }
.report-b .list { height: 82px; padding-top: 0.7px; }
.report-b .list li { height: 7.320px; }
.report-b .checks li { height: 7.930px; }
.report-b .focus { border: 1.5px solid #3f6fd8; }
.report-b .focus .sel { background: #b5d5fb; margin: 0 1px; }
.report-b .focus li { margin: 0 1px; }
.report-b .jobs::after { height: 10px; }
.report-b .titles::after { height: 53px; }
.report-b .basis { margin-top: 9.200px; }
.report-b .basis label { height: 8px; }
.report-b .field { width: 68px; height: 13px; margin: 0 0 2.400px 7px; color: #999; }
.report-b .field:has(em) { width: 80px; }
.report-b .field em { width: 12px; }

/* dashboard */
.dashboard .content { padding: 6.300px 6px 0 5.500px; }
.stats { display: grid; grid-template-columns: repeat(5, 1fr); gap: 7px; }
.stats div { display: flex; align-items: center; height: 26px; background: #fff; box-shadow: 0 1px 1px #d5dbe6; font-size: 8.5px; color: #222; }
.stats i { display: flex; align-items: center; justify-content: center; width: 26.300px; height: 26px; margin-right: 3.500px; color: #fff; font-size: 13px; font-weight: bold; }
.stats svg { width: 12px; height: 11px; }
.stats b { display: block; margin-top: 1.500px; font-size: 5.5px; }
.c1 { background: #47cbf6; }
.c2 { background: #1d4585; }
.c3 { background: #5186c6; }
.c4 { background: #0d2a4e; }
.tracked { display: flex; align-items: center; justify-content: flex-end; gap: 2px; height: 20.400px; padding-top: 2px; font-size: 5.8px; }
.tracked span { display: flex; align-items: center; justify-content: center; width: 17.500px; height: 9.700px; padding-left: 2px; border-left: 3px solid #fff; background: #6b7380; color: #fff; font-size: 6px; }
.tiles { display: grid; grid-template-columns: 199px 406px 199.500px; gap: 7px 7.500px; }
.tiles article { height: 189px; border-top: 2px solid #7cc1e6; background: #fff; box-shadow: 0 1px 1px #d5dbe6; }
.tiles h3 { height: 23.300px; border-bottom: 1px solid #eee; font-size: 7.9px; line-height: 27px; text-align: center; color: #444; letter-spacing: -0.05px; }
.company { padding: 4.300px 7.700px; }
.company p { display: grid; grid-template-columns: 106.500px 1fr; align-items: center; height: 19.850px; border-bottom: 1px solid #e5e5e5; color: #223a66; font-size: 5.7px; }
.company b { color: #222; font-size: 5.5px; }
.sum { display: flex; justify-content: space-between; height: 12.500px; padding: 4px 7px 0; font-size: 5.8px; }
.sum b { color: #0d2a4e; font-size: 6.2px; }
.news a { display: flex; height: 26.700px; padding: 6px 0 0 8px; color: #2ba0c0; font-size: 5.7px; font-weight: bold; }
.news i { position: relative; width: 21px; padding: 7px 0 0 4.5px; font-size: 5px; font-weight: normal; color: #9fd0de; }
.news svg { position: absolute; left: 0; top: 0; width: 14px; height: 17px; }

/* plan list */
.plans .content { padding: 0 13.300px 0 13.700px; }
.filter, .search { display: flex; align-items: center; height: 26px; font-size: 6px; }
.filter { border-bottom: 1px solid #ddd; padding-top: 5.500px; align-items: flex-start; }
.filter label, .search label { width: 26.500px; }
.filter label { padding-top: 7.500px; }
.filter .select, .search .select { width: 97px; height: 13px; margin-top: 3.800px; padding: 0 2px 0 4px; }
.search { height: 30px; }
.search .select { margin: 0; }
.plans .tools { display: flex; align-items: center; gap: 2.500px; margin-left: auto; }
.filter .tools .btn { height: 9.300px; margin-top: 8.500px; padding: 0 3px; font-size: 4.650px; letter-spacing: -0.05px; }
.search .btn { height: 11px; padding: 0 2.500px; margin-right: 3px; font-size: 5.9px; }
.search .tools span { display: flex; align-items: center; }
.search .tools i { width: 8px; height: 7px; margin-right: 0.5px; border: 1px solid #aaa; background: #fdf8e0; }
.search .tools .green { background: #def0d8; }
.plans .row { grid-template-columns: 25fr 91fr 77fr 94fr 160fr 561fr 89fr 150fr 126fr 94fr; height: 20.800px; background: #fdf8e3; border-bottom: 1px solid #e6e0d0; font-size: 5.6px; }
.plans .row > * { margin-left: 3.300px; }
.plans .row.head { height: 17.500px; background: #fff; border-bottom: 1.5px solid #ddd; color: #222; font-size: 5.5px; }
.plans .row.head em { color: #54c; }
.plans .row.tall { height: 25.200px; line-height: 9px; }
.plans .row.done { background: #dcefd8; }
.plans .row > a { font-size: 5.8px; }

/* staffing plan */
.staffing .nav { height: 23.700px; }
.staffing .bar.first { border-radius: 0; margin-bottom: 24.300px; }
.charts { display: grid; grid-template-columns: repeat(3, 256px); justify-content: space-between; height: 182.700px; padding: 11px 4px 0; border: solid #eee; border-width: 0 1px; }
.charts h5 { height: 13px; border-bottom: 1px solid #eee; font-size: 6.3px; line-height: 10px; text-align: center; color: #444; }
.staffing .row, .staff .row { grid-template-columns: 177fr 147fr 147fr 147fr 73fr 59fr 73fr 60fr 102fr 75fr 103fr 103fr 103fr 103fr; width: 807.500px; height: 16.400px; font-size: 4.900px; }
.staffing .row { border-bottom: 1px solid #e4e6ea; background: linear-gradient(90deg, transparent 72%, #90b2e2 72% 79%, #bababa 79% 86%, #90b2e2 86%); }
.staffing .row > *, .staff .row > * { padding: 0 3.300px; }
.staffing .row > :nth-child(n+5), .staff .row > :nth-child(n+5) { display: grid; justify-content: end; text-align: right; }
.staffing .row.head, .staff .row.head { align-items: end; height: 24.600px; margin-bottom: 5px; padding-bottom: 3.500px; border: 0; background: linear-gradient(90deg, #ededed 72%, #b9b9b9 72%); font-size: 4.700px; line-height: 9px; color: #222; }

/* benchmark assessment */
.assessment .nav, .assessment .bar { background: #00274f; }
.assessment .content { padding: 5px 5.300px 0; }
.assessment .details { grid-template-columns: 396.500px 396.500px; column-gap: 8px; height: 111px; padding: 0 10.300px; }
.assessment .details h3 { grid-column: 1 / 3; height: 21px; font-size: 8.600px; line-height: 18px; color: #1786be; }
.assessment .kv p { height: 15.4px; grid-template-columns: 144px 1fr; }
.assessment .kv + .kv p { grid-template-columns: 195px 1fr; }
.steps { display: flex; align-items: center; height: 15px; margin-top: 9px; font-size: 6.4px; }
.steps ol { display: flex; width: 424.500px; height: 15px; border-radius: 1.5px; overflow: hidden; background: #00274f; color: #fff; align-items: center; }
.steps li { padding: 0 9px 0 5px; flex: none; }
.steps li.on { flex: 1; height: 15px; padding-left: 10px; background: #4ba9fb; line-height: 15px; clip-path: polygon(0 0, 100% 0, 100% 100%, 0 100%, 4px 50%); font-size: 6.2px; }
.steps > span { margin: 0 3px 0 auto; }
.steps em { display: flex; align-items: center; justify-content: center; width: 24.500px; height: 12px; margin-right: 4px; border: 1px solid #ccc; border-left-width: 3px; background: #eee; }
.assessment .step { height: 16px; margin-top: 8.200px; }
.pair { display: flex; gap: 14.300px; margin-top: 8.400px; }
.pair .panel { height: 140.500px; }
.pair h4 svg { width: 6px; height: 5px; margin-right: 3px; transform: rotate(180deg); }
.metrics { width: 316.500px; }
.mrow { display: grid; grid-template-columns: 158px 13.500px 69px; height: 11.250px; padding-left: 6px; align-items: center; font-size: 5.6px; }
.mrow b { height: 100%; background: #bababa; padding: 3px 5px 0 0; text-align: right; font-weight: normal; }
.mrow.head { height: 11.500px; margin-top: 4.500px; }
.mrow.head b { font-weight: bold; text-decoration: underline; font-size: 5.5px; }
.mrow.last b { height: 14px; align-self: start; }
.advanced { width: 224.500px; font-size: 5.8px; }
.advanced .basis { padding: 5px 6px 0; }
.advanced .basis label { height: 11.800px; }
.advanced .field { width: 100px; height: 14px; margin: 4px 0 0 9px; color: #999; }
.advanced .field:first-of-type { margin-top: 5px; }
.advanced .field:has(em) { width: 112.500px; }
.advanced .field em { width: 12.500px; }
.advanced .btn { height: 10.700px; margin: 6.500px 0 0 6px; padding: 0 3.500px; font-size: 5.7px; }
.pair + .bar { margin-top: 17.500px; }
.summary { height: 94px; padding: 4.500px 0 0 6px; }
.srow { display: grid; grid-template-columns: 200px 100px 98px 127.500px 73px 129px 78px; height: 13.600px; align-items: center; font-size: 5.6px; text-align: right; }
.srow.head { height: 9.500px; text-decoration: underline; }
.srow > :first-child { text-align: left; }
.srow > :nth-child(3) { padding-right: 8px; }
.srow > :nth-child(4), .srow > :nth-child(5) { height: 100%; padding: 3.500px 7px 0 0; background: #bababa; }
.summary + .bar { margin-top: 24px; }
.staff { height: 58.700px; border-top: 0; }
.staff .row { width: 805px; }
.assessment .staff .row.head { height: 26.400px; margin-bottom: 7.500px; }
.assessment .staff .row.sum { height: 15.500px; }
.staff + .bar { margin-top: 9.500px; }
.overhead { display: grid; grid-template-columns: 412px 1fr; height: 153.700px; }
.overhead h5 { height: 16px; margin: 9px 12px 3px 6px; border-bottom: 1px solid #f0f0f0; text-align: center; font-size: 6px; line-height: 16px; color: #444; }
.orow { display: grid; grid-template-columns: 136px 15px 76px 76px 41px; height: 11.250px; padding-left: 6px; align-items: center; font-size: 5.6px; }
.orow b { font-weight: normal; }
.orow b:nth-child(2) { padding-left: 6px; }
.orow b:nth-child(3) { padding-left: 34px; }
.orow i { height: 100%; padding-top: 3px; background: #bababa; text-align: right; }
.orow i:nth-child(4) { padding-right: 12px; }
.orow i:last-child { padding-right: 14px; text-align: center; }
.orow.head b, .orow.head i { font-weight: bold; font-size: 5.3px; text-decoration: underline; }
.orow.head b:nth-child(3) { padding-left: 0; }
.orow.tot i, .orow.tot b { text-decoration: overline; }
.orow.strong { height: 12.500px; }
.orow.strong span { font-weight: bold; font-size: 5.5px; }
.assessment .actions { margin-top: 16.700px; height: 29.500px; }

/* brands */
.brands .content { padding: 9.600px 14px 0 13.700px; }
.brands .tabs { height: 16.800px; }
.brands .row { grid-template-columns: 587fr 294fr 226fr 263fr 94fr; height: 20.720px; border-bottom: 1px solid #e6e6e6; font-size: 5.6px; }
.brands .row > * { margin-left: 3.300px; }
.brands .row:nth-child(odd) { background: #f9f9f9; }
.brands .row.head { height: 16px; margin-top: 15.300px; color: #222; font-size: 5.5px; background: #fff; }
```
